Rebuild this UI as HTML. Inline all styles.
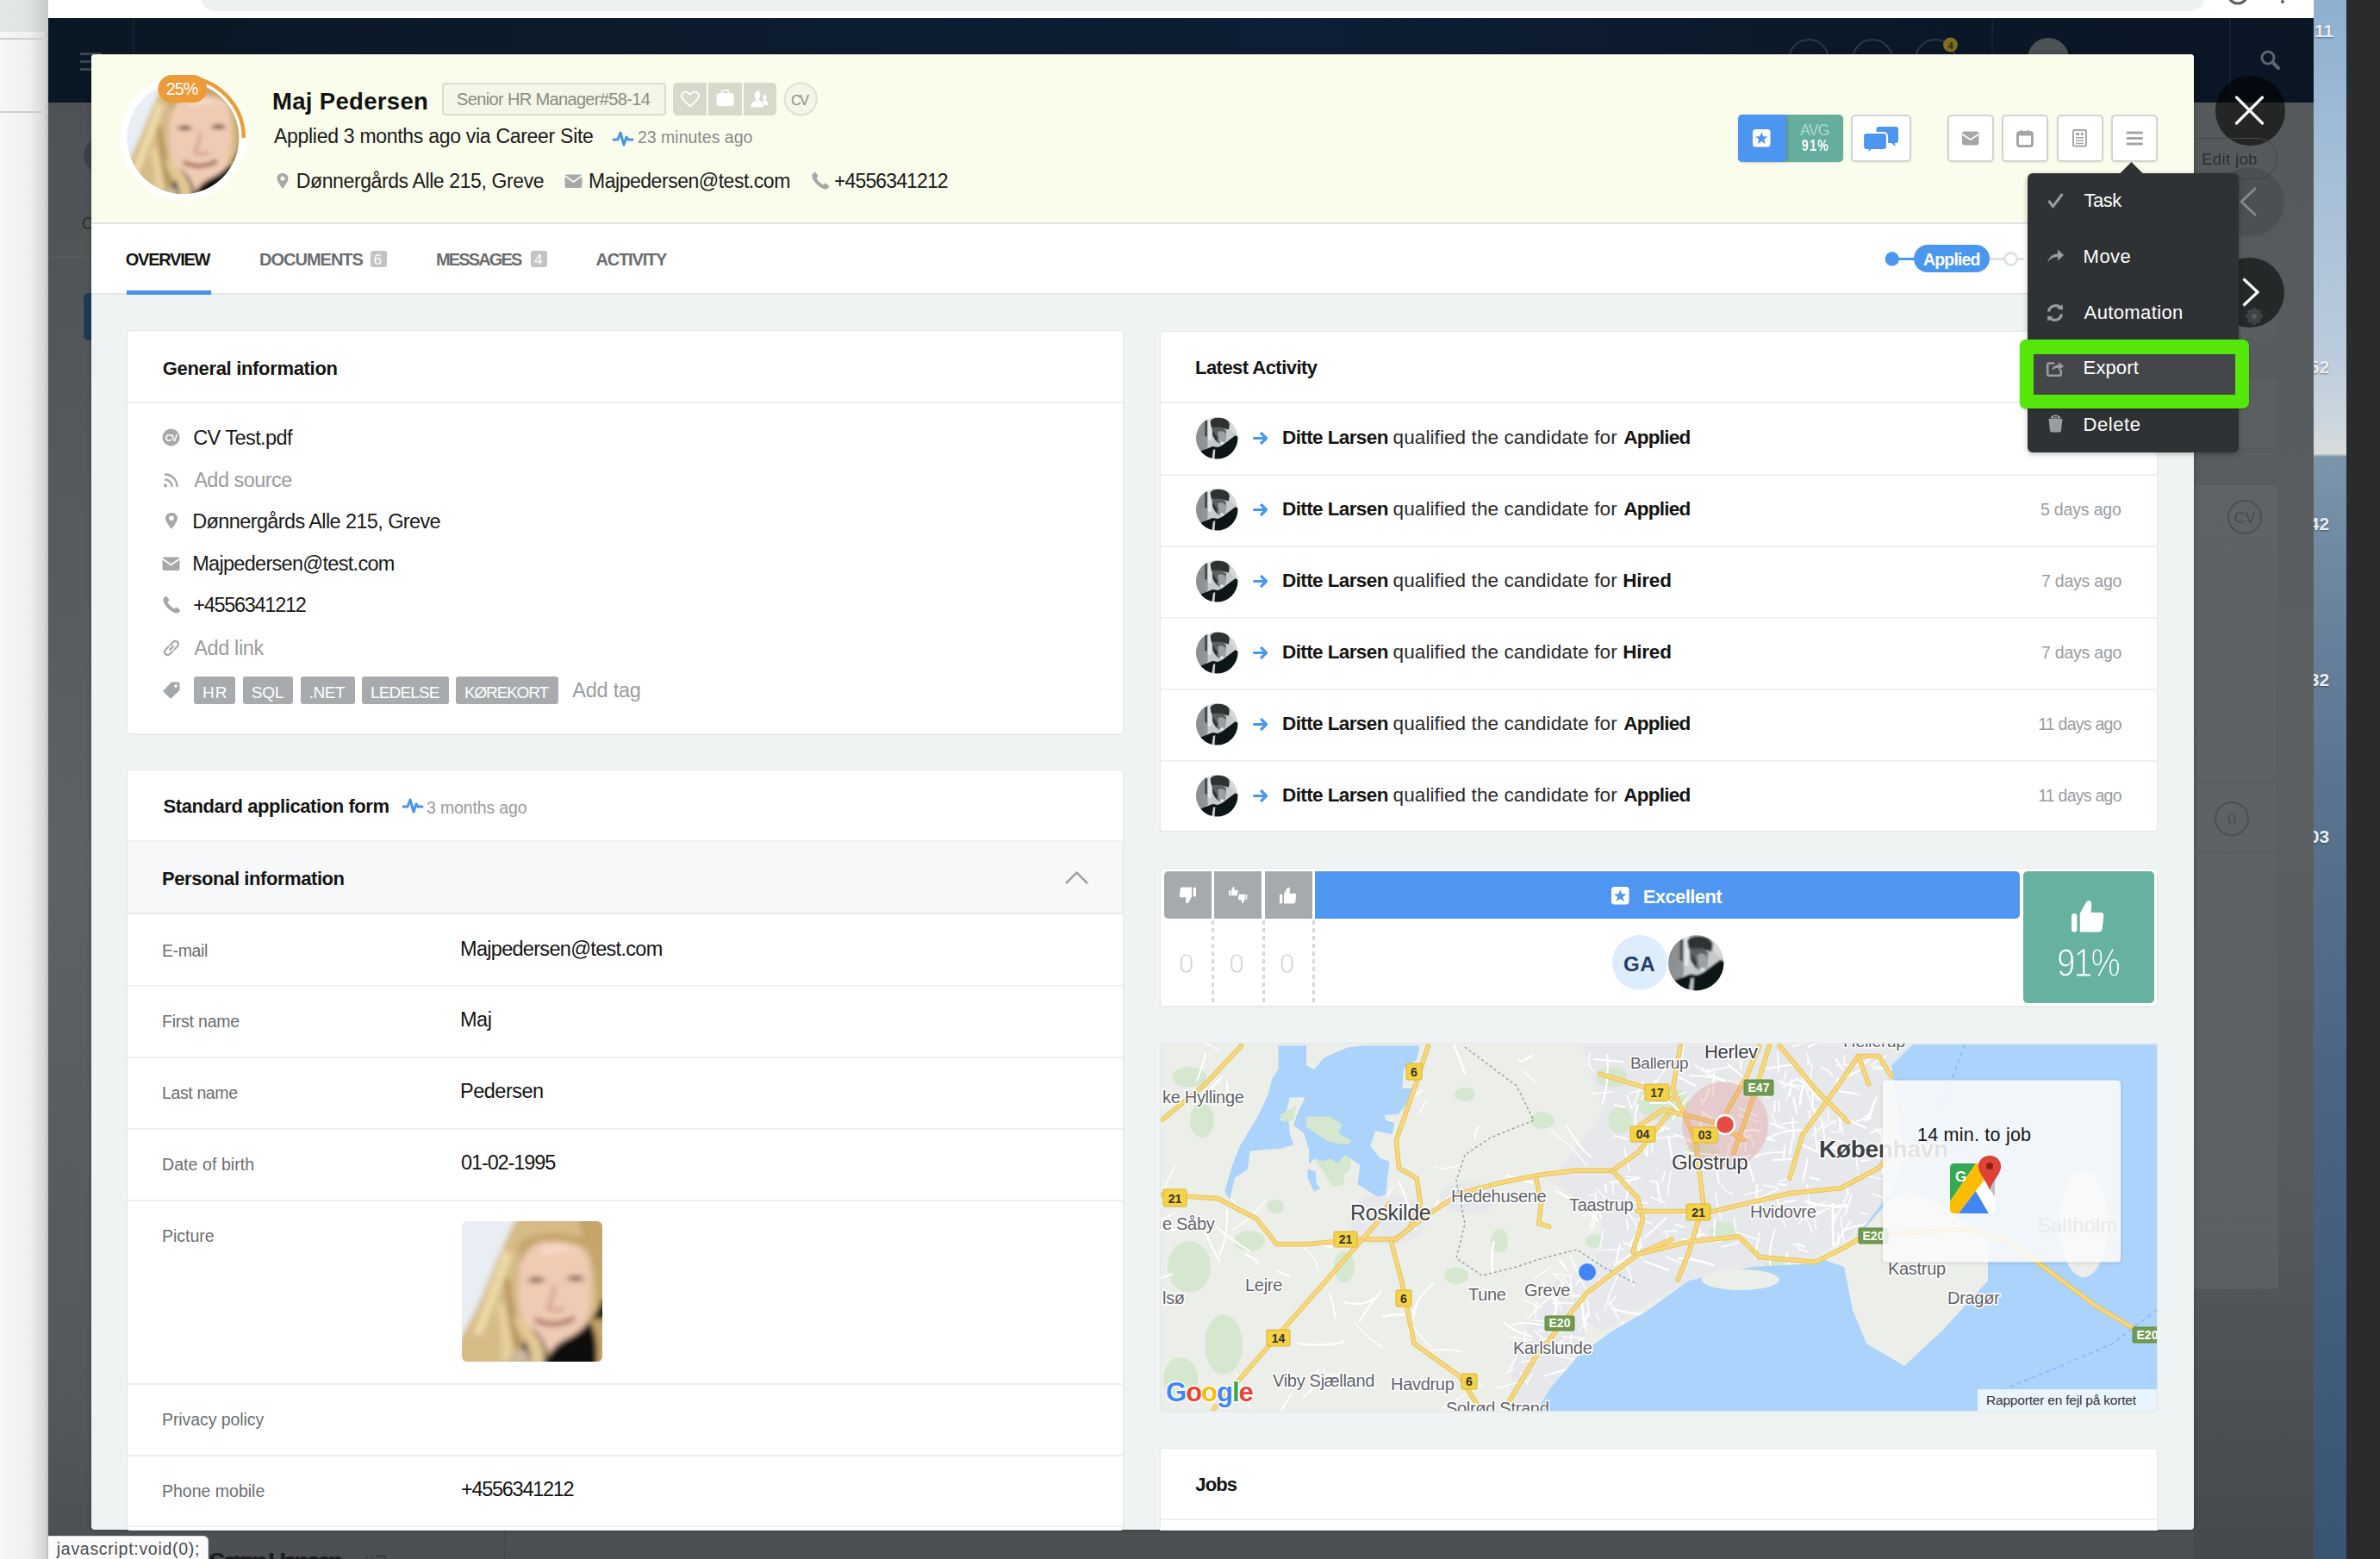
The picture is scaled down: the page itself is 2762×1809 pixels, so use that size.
<!DOCTYPE html>
<html><head><meta charset="utf-8">
<style>
*{box-sizing:border-box;margin:0;padding:0}
html,body{width:2762px;height:1809px;overflow:hidden;background:#2b2c2e;font-family:"Liberation Sans",sans-serif;color:#111}
.a{position:absolute}
.t{position:absolute;line-height:1;white-space:nowrap}
svg{position:absolute;overflow:visible}
.card{position:absolute;background:#fff;border-radius:3px;box-shadow:0 0 0 1px #e5e8e9,0 1px 3px rgba(0,0,0,.07)}
.hb{position:absolute;background:#fff;border:2px solid #d1d3d4;border-radius:5px;box-shadow:0 1px 2px rgba(0,0,0,.08)}

</style></head><body>
<div class="a" style="left:0px;top:0px;width:56px;height:1809px;background:linear-gradient(90deg,#f5f7f8 0%,#eef0f1 60%,#d5d7d8 92%,#b9bbbc 100%)"></div>
<div class="a" style="left:0px;top:0px;width:56px;height:37px;background:linear-gradient(90deg,#e3e7e8 0%,#dfe3e4 60%,#c5c9ca 100%)"></div>
<div class="a" style="left:0px;top:44px;width:56px;height:2px;background:#cdd0d2"></div>
<div class="a" style="left:0px;top:129px;width:56px;height:2px;background:#cdd0d2"></div>
<div class="a" style="left:2685px;top:0px;width:38px;height:1809px;background:linear-gradient(180deg,#8eafcf 0%,#a3bdd6 10%,#b9cadb 22%,#ccd6de 27%,#d9dcdc 29.1%,#7d95ab 29.3%,#6e88a2 36%,#5b7590 50%,#4a6482 70%,#3a5573 100%)"></div>
<div class="a" style="left:2723px;top:0px;width:39px;height:1809px;background:#2a2b2d"></div>
<div class="a" style="left:56px;top:0px;width:2629px;height:22px;background:#fff"></div>
<div class="a" style="left:233px;top:-20px;width:2325px;height:33px;background:#eef1f2;border-radius:16px"></div>
<svg style="left:2580px;top:-14px" width="40" height="30"><circle cx="17" cy="7" r="11" fill="none" stroke="#5f6368" stroke-width="3.2"/></svg>
<div class="a" style="left:2647px;top:0px;width:4px;height:4px;background:#666;border-radius:2px"></div>
<div class="a" style="left:56px;top:21px;width:2629px;height:98px;background:linear-gradient(100deg,#0a1724 0%,#0c1c2e 30%,#0e1f35 55%,#0b1829 80%,#0a1624 100%)"></div>
<div class="a" style="left:154px;top:21px;width:2px;height:98px;background:#142233"></div>
<div class="a" style="left:2311px;top:21px;width:2px;height:98px;background:#142233"></div>
<div class="a" style="left:2587px;top:21px;width:2px;height:98px;background:#142233"></div>
<div class="a" style="left:93px;top:61px;width:25px;height:3px;background:#3a4654"></div>
<div class="a" style="left:93px;top:70px;width:25px;height:3px;background:#3a4654"></div>
<div class="a" style="left:93px;top:79px;width:25px;height:3px;background:#3a4654"></div>
<svg style="left:2074px;top:44px" width="50" height="50"><circle cx="25" cy="25" r="23" fill="none" stroke="#2a3848" stroke-width="2"/></svg>
<svg style="left:2148px;top:44px" width="50" height="50"><circle cx="25" cy="25" r="23" fill="none" stroke="#2a3848" stroke-width="2"/></svg>
<svg style="left:2221px;top:44px" width="50" height="50"><circle cx="25" cy="25" r="23" fill="none" stroke="#2a3848" stroke-width="2"/></svg>
<svg style="left:2253px;top:42px" width="22" height="22"><circle cx="10.5" cy="10" r="8.5" fill="#7d6d1c"/><text x="10.5" y="14.5" font-size="11" font-weight="bold" text-anchor="middle" fill="#2c2a12" font-family="Liberation Sans">4</text></svg>
<div class="a" style="left:2353px;top:44px;width:48px;height:48px;background:#4d5257;border-radius:50%"></div>
<svg style="left:2622px;top:57px" width="30" height="30"><circle cx="10" cy="10" r="7" fill="none" stroke="#5d6670" stroke-width="3"/><line x1="15" y1="15" x2="22" y2="22" stroke="#5d6670" stroke-width="4" stroke-linecap="round"/></svg>
<div class="a" style="left:56px;top:119px;width:2629px;height:1690px;background:linear-gradient(180deg,#4e5254 0%,#575b5d 30%,#5e6264 52%,#595d5f 72%,#54585a 90%,#4b4f51 100%)"></div>
<div class="a" style="left:56px;top:297px;width:2629px;height:1px;background:#585c5e"></div>
<div class="a" style="left:97px;top:340px;width:20px;height:55px;background:#1f3a5a;border-radius:6px"></div>
<div class="a" style="left:97px;top:160px;width:41px;height:41px;background:#3f4244;border-radius:50%"></div>
<div class="t" style="left:94.8px;top:248.8px;font-size:20.0px;color:#2d3032;">C</div>
<div class="a" style="left:2546px;top:119px;width:139px;height:1690px;background:linear-gradient(180deg,#55595b 0%,#5c6062 45%,#565a5c 75%,#46494b 100%)"></div>
<div class="a" style="left:2546px;top:438px;width:97px;height:82px;background:#5b5f61;border-radius:3px;box-shadow:0 0 0 1px #555"></div>
<div class="a" style="left:2546px;top:563px;width:97px;height:932px;background:linear-gradient(180deg,#5f6365,#5c6062);border-radius:3px;box-shadow:0 0 0 1px #575b5d"></div>
<div class="a" style="left:2546px;top:908px;width:97px;height:1px;background:#565a5c"></div>
<div class="a" style="left:2546px;top:990px;width:97px;height:1px;background:#565a5c"></div>
<div class="a" style="left:2546px;top:340px;width:97px;height:53px;background:#5a5e60;border-radius:3px;box-shadow:0 0 0 1px #555"></div>
<svg style="left:2584px;top:579px" width="42" height="42"><circle cx="21" cy="21" r="19" fill="none" stroke="#4c5052" stroke-width="2"/><text x="21" y="28" font-size="18" text-anchor="middle" fill="#474b4d" font-family="Liberation Sans">CV</text></svg>
<svg style="left:2569px;top:929px" width="42" height="42"><circle cx="21" cy="21" r="19" fill="none" stroke="#4c5052" stroke-width="2"/><text x="21" y="28" font-size="18" text-anchor="middle" fill="#474b4d" font-family="Liberation Sans">0</text></svg>
<div class="a" style="left:2685px;top:0;width:38px;height:1809px;overflow:hidden"><div class="t" style="left:0.7px;top:25.0px;font-size:21.0px;font-weight:700;color:#e8eef3;text-shadow:0 1px 2px rgba(0,0,0,.4)">11</div>
<div class="t" style="left:-5.3px;top:414.9px;font-size:21.0px;font-weight:700;color:#e8eef3;text-shadow:0 1px 2px rgba(0,0,0,.4)">52</div>
<div class="t" style="left:-5.3px;top:596.9px;font-size:21.0px;font-weight:700;color:#e8eef3;text-shadow:0 1px 2px rgba(0,0,0,.4)">42</div>
<div class="t" style="left:-5.3px;top:777.9px;font-size:21.0px;font-weight:700;color:#e8eef3;text-shadow:0 1px 2px rgba(0,0,0,.4)">32</div>
<div class="t" style="left:-5.3px;top:959.9px;font-size:21.0px;font-weight:700;color:#e8eef3;text-shadow:0 1px 2px rgba(0,0,0,.4)">03</div>
</div><div class="t" style="left:242.0px;top:1797.3px;font-size:30.0px;letter-spacing:-4.09px;font-weight:700;color:#1b1d1f;">Søren Hansen</div>
<div class="t" style="left:420.0px;top:1800.7px;font-size:26.0px;letter-spacing:-1.00px;color:#3a3d40;font-style:italic">#7</div>
<div class="a" style="left:585px;top:1775px;width:2px;height:34px;background:#46494b"></div>
<div class="a" style="left:106px;top:63px;width:2440px;height:1712px;background:#f0f3f4;border-radius:4px;overflow:hidden;box-shadow:0 0 6px rgba(0,0,0,.25)"></div>
<div class="a" style="left:106px;top:63px;width:2440px;height:196px;background:#fafdeb;border-radius:4px 4px 0 0"></div>
<div class="a" style="left:106px;top:258px;width:2440px;height:2px;background:#e2e5e5"></div>
<div class="a" style="left:106px;top:260px;width:2440px;height:81px;background:#fff"></div>
<div class="a" style="left:106px;top:340px;width:2440px;height:2px;background:#e4e7e9"></div>
<svg width="0" height="0" style="left:0;top:0"><defs>
<filter id="wb" x="-5%" y="-5%" width="110%" height="110%"><feGaussianBlur stdDeviation="2"/></filter>
<symbol id="woman" viewBox="0 0 100 100"><g filter="url(#wb)">
<rect x="-5" y="-5" width="110" height="110" fill="#e8eef3"/>
<path d="M40 -5 L105 -5 L105 105 L-5 105 L-5 90 Q6 72 15 52 Q26 24 40 -5 Z" fill="#d6bb87"/>
<path d="M30 20 Q20 50 8 80 L14 82 Q26 52 36 24 Z" fill="#ecd9a8"/>
<path d="M24 60 Q30 80 28 100 L36 100 Q36 78 30 58 Z" fill="#e6d09c"/>
<path d="M34 40 Q38 70 44 90 L38 92 Q32 70 30 42 Z" fill="#b8985f"/>
<path d="M42 30 Q43 12 62 11 Q85 10 90 28 Q95 52 88 74 Q80 92 64 92 Q48 90 43 72 Q38 52 42 30 Z" fill="#efcbb3"/>
<path d="M40 16 Q60 2 92 14 L93 22 Q76 12 56 15 Q46 18 42 30 Z" fill="#c5a46b"/>
<path d="M86 12 Q97 30 96 62 L105 70 L105 -5 L82 -5 Z" fill="#c6a46a"/>
<path d="M56 20 Q70 16 84 22 Q72 20 58 24 Z" fill="#f6e0d0"/>
<path d="M46 42 Q53 38 60 42 Q53 45 46 42 Z" fill="#4a3028"/>
<path d="M74 41 Q81 37 88 41 Q81 44 74 41 Z" fill="#4a3028"/>
<path d="M66 46 Q64 58 61 62 Q67 65 73 62" fill="none" stroke="#c9917a" stroke-width="2"/>
<path d="M52 70 Q66 77 80 69" fill="none" stroke="#9e5450" stroke-width="3"/>
<path d="M58 105 Q62 88 78 82 Q92 74 100 56 L105 56 L105 105 Z" fill="#0a0a0e"/>
<path d="M40 105 Q42 85 50 76 Q56 80 60 90 L62 105 Z" fill="#1f2944"/>
<path d="M36 68 Q52 74 58 90 Q60 98 57 105 L49 105 Q50 88 40 78 Z" fill="#e3c892"/>
<path d="M30 105 Q36 88 46 92 L50 105 Z" fill="#cbb89b"/>
<path d="M90 70 Q98 80 96 105 L105 105 L105 70 Z" fill="#c7a66c"/>
</g></symbol></defs></svg>
<svg style="left:130px;top:78px" width="165" height="165" viewBox="0 0 165 165">
<defs><clipPath id="avc"><circle cx="82.4" cy="82.1" r="65"/></clipPath></defs>
<circle cx="82.4" cy="82.1" r="72.6" fill="#fff"/>
<g clip-path="url(#avc)"><use href="#woman" x="10" y="12" width="140" height="140"/></g>
<path d="M82.4 11.7 A70.4 70.4 0 0 1 152.8 82.1" fill="none" stroke="#ec9a3a" stroke-width="4.4"/>
<rect x="53.4" y="9.1" width="56.7" height="32.2" rx="16" fill="#ec9a3a"/>
</svg>
<div class="t" style="left:192.8px;top:94.0px;font-size:19.8px;letter-spacing:-1.00px;color:#fff;">25%</div>
<div class="t" style="left:316.0px;top:104.0px;font-size:27.5px;letter-spacing:0.32px;font-weight:700;">Maj Pedersen</div>
<div class="a" style="left:513px;top:96px;width:260px;height:38px;background:#f4f6e8;border:2px solid #dadccf;border-radius:4px"></div>
<div class="t" style="left:530.0px;top:105.4px;font-size:20.0px;letter-spacing:-0.64px;color:#8a8d80;">Senior HR Manager#58-14</div>
<div class="a" style="left:781px;top:96px;width:120px;height:38px;background:#d7dacb;border-radius:5px"></div>
<div class="a" style="left:820px;top:96px;width:2px;height:38px;background:#fafdeb"></div>
<div class="a" style="left:861px;top:96px;width:2px;height:38px;background:#fafdeb"></div>
<svg style="left:789px;top:104px" width="24" height="22" viewBox="0 0 24 22"><path d="M12 19.5 L3.5 11 C0.8 8.2 1.5 3.5 5.5 2.8 C8.2 2.3 10.5 3.8 12 6 C13.5 3.8 15.8 2.3 18.5 2.8 C22.5 3.5 23.2 8.2 20.5 11 Z" fill="none" stroke="#fff" stroke-width="1.8" stroke-linejoin="round"/></svg>
<svg style="left:831px;top:104px" width="22" height="20" viewBox="0 0 22 20"><rect x="6.5" y="0.8" width="8" height="4" rx="1.5" fill="none" stroke="#fff" stroke-width="1.6"/><rect x="0.5" y="4" width="20" height="15" rx="2.5" fill="#fff"/></svg>
<svg style="left:871px;top:105px" width="22" height="21" viewBox="0 0 22 21"><path d="M8 0.5 C5.5 0.5 4.5 3 4.7 5.5 C4.9 8 6 10 6.5 11 C6 12.5 1.5 13.5 0.5 16.5 L0.5 19.5 L15.5 19.5 L15.5 16.5 C14.5 13.5 10 12.5 9.5 11 C10 10 11.1 8 11.3 5.5 C11.5 3 10.5 0.5 8 0.5 Z" fill="#fff"/><path d="M16.5 5 C15 5 14.4 6.5 14.5 8 C14.6 9.5 15.2 10.6 15.5 11.2 C15.3 12 14 12.5 13.5 13 L17 17 L21 17 L21 15.5 C20.5 13.5 18 12.5 17.6 11.2 C17.9 10.6 18.5 9.5 18.6 8 C18.7 6.5 18 5 16.5 5 Z" fill="#fff"/></svg>
<svg style="left:908px;top:94px" width="42" height="42"><circle cx="21.3" cy="20.9" r="18.5" fill="#f3f6e9" stroke="#dde0d3" stroke-width="2"/></svg>
<div class="t" style="left:918.0px;top:107.8px;font-size:16.5px;letter-spacing:-2.00px;color:#8b8e83;">CV</div>
<div class="t" style="left:318.0px;top:146.7px;font-size:23.0px;letter-spacing:-0.29px;color:#1a1a1a;">Applied 3 months ago via Career Site</div>
<svg style="left:711px;top:150px" width="24" height="22" viewBox="0 0 24 22"><path d="M1 12 L6 12 L9 4 L13 18 L16 9 L18 12 L23 12" fill="none" stroke="#4a93ea" stroke-width="3" stroke-linejoin="round" stroke-linecap="round"/></svg>
<div class="t" style="left:740.0px;top:149.6px;font-size:19.5px;letter-spacing:0.00px;color:#8a8a8a;">23 minutes ago</div>
<svg style="left:320px;top:200px" width="16" height="20" viewBox="0 0 16 20"><path d="M8 19 C8 19 1.5 11 1.5 7 C1.5 3.3 4.5 1 8 1 C11.5 1 14.5 3.3 14.5 7 C14.5 11 8 19 8 19 Z" fill="#a6a9ab"/><circle cx="8" cy="7" r="2.6" fill="#fafdeb"/></svg>
<div class="t" style="left:343.8px;top:198.8px;font-size:23.0px;letter-spacing:-0.39px;color:#1a1a1a;">Dønnergårds Alle 215, Greve</div>
<svg style="left:655px;top:202px" width="21" height="17" viewBox="0 0 21 17"><rect x="0.5" y="0.5" width="20" height="15.5" rx="2" fill="#a6a9ab"/><path d="M0.5 2 L10.5 9 L20.5 2" fill="none" stroke="#fafdeb" stroke-width="1.8"/></svg>
<div class="t" style="left:683.0px;top:198.8px;font-size:23.0px;letter-spacing:-0.47px;color:#1a1a1a;">Majpedersen@test.com</div>
<svg style="left:941px;top:199px" width="22" height="22" viewBox="0 0 22 22"><path d="M3.5 1.5 C2 2.5 1 4 1.5 6.5 C2.5 11 9 18 14.5 20 C17 21 18.8 20.5 20.2 19 L21 18 C21.3 17.5 21.2 16.8 20.7 16.4 L17.5 14 C17 13.6 16.3 13.6 15.8 14.1 L14.3 15.5 C11.5 14 8 10.5 6.5 7.7 L7.9 6.2 C8.4 5.7 8.4 5 8 4.5 L5.6 1.3 C5.2 0.8 4.5 0.7 4 1.1 Z" fill="#a6a9ab"/></svg>
<div class="t" style="left:968.0px;top:198.8px;font-size:23.0px;letter-spacing:-0.87px;color:#1a1a1a;">+4556341212</div>
<div class="a" style="left:2017px;top:133px;width:122px;height:55px;background:#65ae9f;border-radius:5px;box-shadow:0 1px 2px rgba(0,0,0,.12)"></div>
<div class="a" style="left:2017px;top:133px;width:56px;height:55px;background:#4d96f0;border-radius:5px;box-shadow:2px 0 3px rgba(0,0,0,.12)"></div>
<svg style="left:2034px;top:150px" width="21" height="21" viewBox="0 0 21 21"><rect x="0" y="0" width="20.5" height="20.5" rx="3.5" fill="#fff"/><path d="M10.25 3.2 L12.2 8.3 L17.5 8.5 L13.3 11.8 L14.8 17 L10.25 14 L5.7 17 L7.2 11.8 L3 8.5 L8.3 8.3 Z" fill="#4d96f0"/></svg>
<div class="t" style="left:2089.0px;top:143.3px;font-size:17.5px;letter-spacing:-0.60px;color:#d6efe8;-webkit-text-stroke:0.5px #65ae9f">AVG</div>
<div class="t" style="left:2091.0px;top:161.3px;font-size:17.5px;letter-spacing:1.70px;font-weight:700;color:#fff;transform:scaleX(0.8);transform-origin:0 0">91%</div>
<div class="hb" style="left:2148px;top:133px;width:70px;height:55px"></div>
<svg style="left:2160px;top:145px" width="46" height="36" viewBox="0 0 46 36"><path d="M20.5 2 H40 A3 3 0 0 1 43 5 V18 A3 3 0 0 1 40 21 H39 L39.5 25 L35 21 H20.5 A3 3 0 0 1 17.5 18 V5 A3 3 0 0 1 20.5 2 Z" fill="#4d96f0"/>
<path d="M6 9 H26 A4 4 0 0 1 30 13 V25 A4 4 0 0 1 26 29 H12 L7 34 L7.5 29 H6 A4 4 0 0 1 2 25 V13 A4 4 0 0 1 6 9 Z" fill="#4d96f0" stroke="#fff" stroke-width="2.2"/></svg>
<div class="hb" style="left:2260px;top:133px;width:54px;height:55px"></div>
<div class="hb" style="left:2323px;top:133px;width:54px;height:55px"></div>
<div class="hb" style="left:2387px;top:133px;width:54px;height:55px"></div>
<div class="hb" style="left:2450px;top:133px;width:54px;height:55px"></div>
<svg style="left:2277px;top:152px" width="20" height="17" viewBox="0 0 20 17"><rect x="0" y="0.5" width="19.5" height="16" rx="3" fill="#a4a7a9"/><path d="M0.5 4 L9.75 10 L19 4" fill="none" stroke="#fff" stroke-width="1.8"/></svg>
<svg style="left:2340px;top:150px" width="21" height="21" viewBox="0 0 21 21"><rect x="1.5" y="3.5" width="17" height="16" rx="2.5" fill="none" stroke="#a4a7a9" stroke-width="3"/><rect x="1.5" y="3.5" width="17" height="4" fill="#a4a7a9"/><line x1="6" y1="0.5" x2="6" y2="4" stroke="#a4a7a9" stroke-width="1.6"/><line x1="14" y1="0.5" x2="14" y2="4" stroke="#a4a7a9" stroke-width="1.6"/></svg>
<svg style="left:2405px;top:150px" width="18" height="21" viewBox="0 0 18 21"><rect x="1" y="1" width="15" height="18.5" rx="1.5" fill="none" stroke="#a4a7a9" stroke-width="2"/><rect x="4" y="4" width="4" height="3" fill="#a4a7a9"/><rect x="10" y="4" width="3" height="3" fill="#a4a7a9"/><rect x="4" y="9" width="9" height="1.5" fill="#a4a7a9"/><rect x="4" y="12.3" width="9" height="1.5" fill="#a4a7a9"/><rect x="4" y="15.6" width="9" height="1.5" fill="#a4a7a9"/></svg>
<svg style="left:2467px;top:152px" width="21" height="17" viewBox="0 0 21 17"><rect x="0.5" y="0.5" width="19.5" height="3" rx="1.5" fill="#a4a7a9"/><rect x="0.5" y="7" width="19.5" height="3" rx="1.5" fill="#a4a7a9"/><rect x="0.5" y="13.5" width="19.5" height="3" rx="1.5" fill="#a4a7a9"/></svg>
<div class="t" style="left:145.8px;top:291.2px;font-size:20.0px;letter-spacing:-1.26px;font-weight:700;color:#151515;">OVERVIEW</div>
<div class="a" style="left:147px;top:337px;width:98px;height:5px;background:#4a91e9"></div>
<div class="t" style="left:301.0px;top:291.2px;font-size:20.0px;letter-spacing:-1.00px;font-weight:700;color:#6b6d6f;">DOCUMENTS</div>
<div class="a" style="left:430px;top:291px;width:19px;height:19px;background:#c1c3c5;border-radius:3px"></div>
<div class="t" style="left:433.5px;top:293.4px;font-size:17.0px;letter-spacing:72.00px;color:#fff;">6</div>
<div class="t" style="left:506.0px;top:291.2px;font-size:20.0px;letter-spacing:-1.86px;font-weight:700;color:#6b6d6f;">MESSAGES</div>
<div class="a" style="left:616px;top:291px;width:19px;height:19px;background:#c1c3c5;border-radius:3px"></div>
<div class="t" style="left:620.0px;top:293.4px;font-size:17.0px;letter-spacing:54.00px;color:#fff;">4</div>
<div class="t" style="left:691.5px;top:291.2px;font-size:20.0px;letter-spacing:-1.17px;font-weight:700;color:#6b6d6f;">ACTIVITY</div>
<svg style="left:2180px;top:280px" width="180" height="40"><circle cx="15.8" cy="20.5" r="8.2" fill="#4a97ee"/><rect x="20" y="19" width="30" height="3" fill="#4a97ee"/><rect x="41" y="4" width="88" height="32" rx="16" fill="#4a97ee"/><rect x="129" y="19" width="40" height="3" fill="#dfe2e4"/><circle cx="153.6" cy="20.5" r="7" fill="#fff" stroke="#dfe2e4" stroke-width="3"/></svg>
<div class="t" style="left:2232.0px;top:291.7px;font-size:19.5px;letter-spacing:-0.83px;font-weight:700;color:#fff;">Applied</div>
<div class="card" style="left:148px;top:384px;width:1155px;height:467px"></div>
<div class="a" style="left:148px;top:466px;width:1155px;height:2px;background:#eef0f1"></div>
<div class="t" style="left:188.7px;top:416.5px;font-size:22.0px;letter-spacing:-0.32px;font-weight:700;color:#141414;">General information</div>
<div class="t" style="left:224.2px;top:496.8px;font-size:23.5px;letter-spacing:-0.56px;color:#1a1a1a;">CV Test.pdf</div>
<div class="t" style="left:225.2px;top:545.6px;font-size:23.5px;letter-spacing:-0.52px;color:#9a9c9e;">Add source</div>
<div class="t" style="left:223.2px;top:594.4px;font-size:23.5px;letter-spacing:-0.61px;color:#1a1a1a;">Dønnergårds Alle 215, Greve</div>
<div class="t" style="left:223.2px;top:643.1px;font-size:23.5px;letter-spacing:-0.70px;color:#1a1a1a;">Majpedersen@test.com</div>
<div class="t" style="left:224.2px;top:691.2px;font-size:23.5px;letter-spacing:-1.28px;color:#1a1a1a;">+4556341212</div>
<div class="t" style="left:225.2px;top:740.5px;font-size:23.5px;letter-spacing:-0.37px;color:#9a9c9e;">Add link</div>
<svg style="left:188px;top:497px" width="22" height="22" viewBox="0 0 22 22"><circle cx="10.5" cy="10.5" r="10" fill="#a5a8aa"/><text x="10.5" y="15" font-size="11" font-weight="bold" text-anchor="middle" fill="#fff" font-family="Liberation Sans" letter-spacing="-1">CV</text></svg>
<svg style="left:189px;top:547px" width="20" height="20" viewBox="0 0 20 20"><circle cx="3" cy="16.5" r="2" fill="#a5a8aa"/><path d="M2 9.5 A8 8 0 0 1 10.5 18" fill="none" stroke="#a5a8aa" stroke-width="2.3"/><path d="M2 3.5 A14 14 0 0 1 16.5 18" fill="none" stroke="#a5a8aa" stroke-width="2.3"/></svg>
<svg style="left:191px;top:594px" width="16" height="21" viewBox="0 0 16 21"><path d="M8 20 C8 20 1 11.5 1 7.3 C1 3.5 4 1 8 1 C12 1 15 3.5 15 7.3 C15 11.5 8 20 8 20 Z" fill="#a5a8aa"/><circle cx="8" cy="7.3" r="2.8" fill="#fff"/></svg>
<svg style="left:188px;top:646px" width="21" height="17" viewBox="0 0 21 17"><rect x="0.5" y="0.5" width="20" height="15.5" rx="2" fill="#a5a8aa"/><path d="M0.5 2.5 L10.5 9.5 L20.5 2.5" fill="none" stroke="#fff" stroke-width="1.8"/></svg>
<svg style="left:188px;top:691px" width="22" height="22" viewBox="0 0 22 22"><path d="M3.5 1.5 C2 2.5 1 4 1.5 6.5 C2.5 11 9 18 14.5 20 C17 21 18.8 20.5 20.2 19 L21 18 C21.3 17.5 21.2 16.8 20.7 16.4 L17.5 14 C17 13.6 16.3 13.6 15.8 14.1 L14.3 15.5 C11.5 14 8 10.5 6.5 7.7 L7.9 6.2 C8.4 5.7 8.4 5 8 4.5 L5.6 1.3 C5.2 0.8 4.5 0.7 4 1.1 Z" fill="#a5a8aa"/></svg>
<svg style="left:188px;top:741px" width="22" height="22" viewBox="0 0 22 22"><path d="M9 13 L13 9" stroke="#a5a8aa" stroke-width="2.2" stroke-linecap="round"/><path d="M7.5 9.5 L4 13 A3.5 3.5 0 0 0 9 18 L12.5 14.5" fill="none" stroke="#a5a8aa" stroke-width="2.2" stroke-linecap="round"/><path d="M9.5 7.5 L13 4 A3.5 3.5 0 0 1 18 9 L14.5 12.5" fill="none" stroke="#a5a8aa" stroke-width="2.2" stroke-linecap="round"/></svg>
<svg style="left:188px;top:790px" width="22" height="22" viewBox="0 0 22 22"><path d="M11 1.5 H19 A1.5 1.5 0 0 1 20.5 3 V11 L10 21 L1 12 Z" fill="#a5a8aa"/><circle cx="16" cy="6" r="1.8" fill="#fff"/></svg>
<div class="a" style="left:225px;top:785px;width:48px;height:32px;background:#a8abad;border-radius:3px"></div>
<div class="t" style="left:234.9px;top:794.1px;font-size:19.0px;letter-spacing:1.20px;color:#fff;">HR</div>
<div class="a" style="left:282px;top:785px;width:58px;height:32px;background:#a8abad;border-radius:3px"></div>
<div class="t" style="left:291.8px;top:794.1px;font-size:19.0px;letter-spacing:-0.20px;color:#fff;">SQL</div>
<div class="a" style="left:349px;top:785px;width:63px;height:32px;background:#a8abad;border-radius:3px"></div>
<div class="t" style="left:358.7px;top:794.1px;font-size:19.0px;letter-spacing:-0.43px;color:#fff;">.NET</div>
<div class="a" style="left:420px;top:785px;width:101px;height:32px;background:#a8abad;border-radius:3px"></div>
<div class="t" style="left:430.0px;top:794.1px;font-size:19.0px;letter-spacing:-0.86px;color:#fff;">LEDELSE</div>
<div class="a" style="left:529px;top:785px;width:119px;height:32px;background:#a8abad;border-radius:3px"></div>
<div class="t" style="left:539.0px;top:794.1px;font-size:19.0px;letter-spacing:-1.18px;color:#fff;">KØREKORT</div>
<div class="t" style="left:664.3px;top:790.3px;font-size:23.5px;letter-spacing:-0.25px;color:#9a9c9e;">Add tag</div>
<div class="card" style="left:148px;top:894px;width:1155px;height:881px"></div>
<div class="a" style="left:148px;top:975px;width:1155px;height:2px;background:#eef0f1"></div>
<div class="t" style="left:189.5px;top:925.1px;font-size:22.0px;letter-spacing:-0.42px;font-weight:700;color:#141414;">Standard application form</div>
<svg style="left:467px;top:924px" width="24" height="22" viewBox="0 0 24 22"><path d="M1 12 L6 12 L9 4 L13 18 L16 9 L18 12 L23 12" fill="none" stroke="#4a93ea" stroke-width="3" stroke-linejoin="round" stroke-linecap="round"/></svg>
<div class="t" style="left:495.0px;top:928.2px;font-size:19.5px;letter-spacing:-0.14px;color:#999b9d;">3 months ago</div>
<div class="a" style="left:148px;top:977px;width:1155px;height:83px;background:#f6f8f9"></div>
<div class="a" style="left:148px;top:1059px;width:1155px;height:2px;background:#e9ecee"></div>
<div class="t" style="left:188.0px;top:1008.6px;font-size:22.0px;letter-spacing:-0.42px;font-weight:700;color:#141414;">Personal information</div>
<svg style="left:1234px;top:1007px" width="32" height="22"><path d="M3 18 L15.5 5.5 L28 18" fill="none" stroke="#9ea1a3" stroke-width="2.5"/></svg>
<div class="t" style="left:188.0px;top:1093.7px;font-size:19.5px;letter-spacing:-0.40px;color:#6b6e70;">E-mail</div>
<div class="t" style="left:534.0px;top:1090.3px;font-size:23.5px;letter-spacing:-0.70px;color:#141414;">Majpedersen@test.com</div>
<div class="a" style="left:148px;top:1143px;width:1155px;height:2px;background:#eef0f1"></div>
<div class="t" style="left:188.0px;top:1175.7px;font-size:19.5px;letter-spacing:-0.22px;color:#6b6e70;">First name</div>
<div class="t" style="left:534.0px;top:1172.3px;font-size:23.5px;letter-spacing:-0.50px;color:#141414;">Maj</div>
<div class="a" style="left:148px;top:1226px;width:1155px;height:2px;background:#eef0f1"></div>
<div class="t" style="left:188.0px;top:1258.7px;font-size:19.5px;letter-spacing:-0.38px;color:#6b6e70;">Last name</div>
<div class="t" style="left:534.0px;top:1255.3px;font-size:23.5px;letter-spacing:-0.50px;color:#141414;">Pedersen</div>
<div class="a" style="left:148px;top:1309px;width:1155px;height:2px;background:#eef0f1"></div>
<div class="t" style="left:188.0px;top:1341.7px;font-size:19.5px;letter-spacing:0.08px;color:#6b6e70;">Date of birth</div>
<div class="t" style="left:535.0px;top:1338.3px;font-size:23.5px;letter-spacing:-1.11px;color:#141414;">01-02-1995</div>
<div class="a" style="left:148px;top:1392px;width:1155px;height:2px;background:#eef0f1"></div>
<div class="t" style="left:188.0px;top:1425.2px;font-size:19.5px;color:#6b6e70;">Picture</div>
<div class="a" style="left:148px;top:1605px;width:1155px;height:2px;background:#eef0f1"></div>
<div class="t" style="left:188.0px;top:1637.7px;font-size:19.5px;letter-spacing:-0.08px;color:#6b6e70;">Privacy policy</div>
<div class="a" style="left:148px;top:1688px;width:1155px;height:2px;background:#eef0f1"></div>
<div class="t" style="left:188.0px;top:1720.7px;font-size:19.5px;letter-spacing:-0.00px;color:#6b6e70;">Phone mobile</div>
<div class="t" style="left:535.0px;top:1717.3px;font-size:23.5px;letter-spacing:-1.28px;color:#141414;">+4556341212</div>
<div class="a" style="left:148px;top:1770px;width:1155px;height:2px;background:#eef0f1"></div>
<svg style="left:535.5px;top:1417px" width="163" height="163" viewBox="0 0 163 163"><defs><clipPath id="picc"><rect x="0" y="0" width="163" height="163" rx="6"/></clipPath></defs><g clip-path="url(#picc)"><use href="#woman" x="0" y="0" width="163" height="163"/></g></svg>
<svg width="0" height="0" style="left:0;top:0"><defs>
<clipPath id="mc"><circle cx="50" cy="50" r="50"/></clipPath>
<filter id="mb" x="-10%" y="-10%" width="120%" height="120%"><feGaussianBlur stdDeviation="1.3"/></filter>
<symbol id="man" viewBox="0 0 100 100"><g clip-path="url(#mc)"><g filter="url(#mb)">
<rect x="-5" y="-5" width="110" height="110" fill="#c6cacd"/>
<rect x="-5" y="-5" width="30" height="110" fill="#8c9093"/>
<rect x="21" y="8" width="6" height="55" fill="#474b4e"/>
<rect x="29" y="-5" width="8" height="60" fill="#e4e7e8"/>
<path d="M80 -5 L105 -5 L105 50 Q90 40 82 30 Z" fill="#d5d8da"/>
<path d="M14 50 Q20 42 27 48 L28 72 L14 74 Z" fill="#909497"/>
<path d="M34 10 Q40 0 60 2 Q78 4 80 18 L78 30 L62 26 L40 30 L36 22 Z" fill="#2d3032"/>
<path d="M38 24 L62 24 L72 32 L70 58 L58 64 L48 58 L40 44 Z" fill="#5a5e61"/>
<path d="M42 34 Q46 44 52 50 L48 56 Q40 48 40 38 Z" fill="#2f3234"/>
<path d="M52 36 Q62 30 70 38 L70 60 L60 66 L54 56 Z" fill="#9ca0a3"/>
<ellipse cx="62" cy="62" rx="5" ry="3" fill="#e8eaeb"/>
<path d="M10 82 L40 70 L52 72 L62 68 L94 44 L106 50 L106 106 L8 106 Z" fill="#111314"/>
<path d="M37 106 L41 78 L46 77 L44 106 Z" fill="#c9cdd0"/>
</g></g></symbol>
<symbol id="thu" viewBox="0 0 20 20"><rect x="0" y="8.5" width="3.3" height="11" rx="1.5" fill="#fff"/><path d="M5 8.5 L8.8 1.6 Q9.8 0.4 11.3 1 Q11.9 1.4 11.9 2.5 L11.6 7.8 H17.6 Q19.3 8 19.2 9.8 L18.3 17.6 Q18 19.5 16 19.5 H5.6 Q5 19.5 5 18.8 Z" fill="#fff"/></symbol>
</defs></svg>
<div class="card" style="left:1347px;top:385px;width:1156px;height:579px"></div>
<div class="a" style="left:1347px;top:466px;width:1156px;height:2px;background:#eef0f1"></div>
<div class="t" style="left:1387.0px;top:416.1px;font-size:22.0px;letter-spacing:-0.54px;font-weight:700;color:#141414;">Latest Activity</div>
<svg style="left:1387.8px;top:484px" width="48.5" height="48.5"><use href="#man" width="48.5" height="48.5"/></svg>
<svg style="left:1452px;top:500px" width="22" height="17" viewBox="0 0 22 17"><path d="M3.5 8.5 H17 M12 3 L17.5 8.5 L12 14" fill="none" stroke="#4a97f0" stroke-width="3.2" stroke-linecap="round" stroke-linejoin="round"/></svg>
<div class="t" style="left:1488.0px;top:496.9px;font-size:22.5px;letter-spacing:-0.60px;font-weight:700;color:#141414;">Ditte Larsen</div>
<div class="t" style="left:1616.6px;top:496.9px;font-size:22.5px;letter-spacing:0.09px;color:#2a2a2a;">qualified the candidate for</div>
<div class="t" style="left:1884.2px;top:496.9px;font-size:22.5px;letter-spacing:-0.75px;font-weight:700;color:#141414;">Applied</div>
<div class="a" style="left:1347px;top:550px;width:1156px;height:2px;background:#eef0f1"></div>
<svg style="left:1387.8px;top:567px" width="48.5" height="48.5"><use href="#man" width="48.5" height="48.5"/></svg>
<svg style="left:1452px;top:583px" width="22" height="17" viewBox="0 0 22 17"><path d="M3.5 8.5 H17 M12 3 L17.5 8.5 L12 14" fill="none" stroke="#4a97f0" stroke-width="3.2" stroke-linecap="round" stroke-linejoin="round"/></svg>
<div class="t" style="left:1488.0px;top:579.9px;font-size:22.5px;letter-spacing:-0.60px;font-weight:700;color:#141414;">Ditte Larsen</div>
<div class="t" style="left:1616.6px;top:579.9px;font-size:22.5px;letter-spacing:0.09px;color:#2a2a2a;">qualified the candidate for</div>
<div class="t" style="left:1884.2px;top:579.9px;font-size:22.5px;letter-spacing:-0.75px;font-weight:700;color:#141414;">Applied</div>
<div class="t" style="left:2367.9px;top:582.4px;font-size:19.5px;letter-spacing:-0.16px;color:#9a9da0;">5 days ago</div>
<div class="a" style="left:1347px;top:633px;width:1156px;height:2px;background:#eef0f1"></div>
<svg style="left:1387.8px;top:650px" width="48.5" height="48.5"><use href="#man" width="48.5" height="48.5"/></svg>
<svg style="left:1452px;top:666px" width="22" height="17" viewBox="0 0 22 17"><path d="M3.5 8.5 H17 M12 3 L17.5 8.5 L12 14" fill="none" stroke="#4a97f0" stroke-width="3.2" stroke-linecap="round" stroke-linejoin="round"/></svg>
<div class="t" style="left:1488.0px;top:662.9px;font-size:22.5px;letter-spacing:-0.60px;font-weight:700;color:#141414;">Ditte Larsen</div>
<div class="t" style="left:1616.6px;top:662.9px;font-size:22.5px;letter-spacing:0.09px;color:#2a2a2a;">qualified the candidate for</div>
<div class="t" style="left:1883.2px;top:662.9px;font-size:22.5px;letter-spacing:-0.20px;font-weight:700;color:#141414;">Hired</div>
<div class="t" style="left:2369.0px;top:665.4px;font-size:19.5px;letter-spacing:-0.23px;color:#9a9da0;">7 days ago</div>
<div class="a" style="left:1347px;top:716px;width:1156px;height:2px;background:#eef0f1"></div>
<svg style="left:1387.8px;top:733px" width="48.5" height="48.5"><use href="#man" width="48.5" height="48.5"/></svg>
<svg style="left:1452px;top:749px" width="22" height="17" viewBox="0 0 22 17"><path d="M3.5 8.5 H17 M12 3 L17.5 8.5 L12 14" fill="none" stroke="#4a97f0" stroke-width="3.2" stroke-linecap="round" stroke-linejoin="round"/></svg>
<div class="t" style="left:1488.0px;top:745.9px;font-size:22.5px;letter-spacing:-0.60px;font-weight:700;color:#141414;">Ditte Larsen</div>
<div class="t" style="left:1616.6px;top:745.9px;font-size:22.5px;letter-spacing:0.09px;color:#2a2a2a;">qualified the candidate for</div>
<div class="t" style="left:1883.2px;top:745.9px;font-size:22.5px;letter-spacing:-0.20px;font-weight:700;color:#141414;">Hired</div>
<div class="t" style="left:2369.0px;top:748.4px;font-size:19.5px;letter-spacing:-0.23px;color:#9a9da0;">7 days ago</div>
<div class="a" style="left:1347px;top:799px;width:1156px;height:2px;background:#eef0f1"></div>
<svg style="left:1387.8px;top:816px" width="48.5" height="48.5"><use href="#man" width="48.5" height="48.5"/></svg>
<svg style="left:1452px;top:832px" width="22" height="17" viewBox="0 0 22 17"><path d="M3.5 8.5 H17 M12 3 L17.5 8.5 L12 14" fill="none" stroke="#4a97f0" stroke-width="3.2" stroke-linecap="round" stroke-linejoin="round"/></svg>
<div class="t" style="left:1488.0px;top:828.9px;font-size:22.5px;letter-spacing:-0.60px;font-weight:700;color:#141414;">Ditte Larsen</div>
<div class="t" style="left:1616.6px;top:828.9px;font-size:22.5px;letter-spacing:0.09px;color:#2a2a2a;">qualified the candidate for</div>
<div class="t" style="left:1884.2px;top:828.9px;font-size:22.5px;letter-spacing:-0.75px;font-weight:700;color:#141414;">Applied</div>
<div class="t" style="left:2365.2px;top:831.4px;font-size:19.5px;letter-spacing:-0.75px;color:#9a9da0;">11 days ago</div>
<div class="a" style="left:1347px;top:882px;width:1156px;height:2px;background:#eef0f1"></div>
<svg style="left:1387.8px;top:899px" width="48.5" height="48.5"><use href="#man" width="48.5" height="48.5"/></svg>
<svg style="left:1452px;top:915px" width="22" height="17" viewBox="0 0 22 17"><path d="M3.5 8.5 H17 M12 3 L17.5 8.5 L12 14" fill="none" stroke="#4a97f0" stroke-width="3.2" stroke-linecap="round" stroke-linejoin="round"/></svg>
<div class="t" style="left:1488.0px;top:911.9px;font-size:22.5px;letter-spacing:-0.60px;font-weight:700;color:#141414;">Ditte Larsen</div>
<div class="t" style="left:1616.6px;top:911.9px;font-size:22.5px;letter-spacing:0.09px;color:#2a2a2a;">qualified the candidate for</div>
<div class="t" style="left:1884.2px;top:911.9px;font-size:22.5px;letter-spacing:-0.75px;font-weight:700;color:#141414;">Applied</div>
<div class="t" style="left:2365.2px;top:914.4px;font-size:19.5px;letter-spacing:-0.75px;color:#9a9da0;">11 days ago</div>
<div class="card" style="left:1347px;top:1008px;width:1156px;height:159px"></div>
<div class="a" style="left:1351px;top:1011px;width:55px;height:55px;background:#a7aaac;border-radius:5px 0 0 5px"></div>
<div class="a" style="left:1409px;top:1011px;width:55px;height:55px;background:#a7aaac"></div>
<div class="a" style="left:1468px;top:1011px;width:55px;height:55px;background:#a7aaac"></div>
<div class="a" style="left:1526px;top:1011px;width:818px;height:55px;background:#4e96f1;border-radius:0 5px 5px 0"></div>
<svg style="left:1368px;top:1028.5px" width="20" height="20" viewBox="0 0 20 20"><g transform="rotate(180 10 10)"><use href="#thu" width="20" height="20"/></g></svg>
<svg style="left:1485px;top:1028.5px" width="20" height="20" viewBox="0 0 20 20"><use href="#thu" width="20" height="20"/></svg>
<svg style="left:1426px;top:1028px" width="22" height="22" viewBox="0 0 22 22"><use href="#thu" x="0" y="0" width="11" height="12"/><g transform="rotate(180 16 15)"><use href="#thu" x="10.5" y="9" width="11" height="12"/></g></svg>
<div class="a" style="left:1406px;top:1068px;width:3px;height:96px;background:repeating-linear-gradient(180deg,#d6d9db 0 5px,transparent 5px 9px)"></div>
<div class="a" style="left:1464.5px;top:1068px;width:3px;height:96px;background:repeating-linear-gradient(180deg,#d6d9db 0 5px,transparent 5px 9px)"></div>
<div class="a" style="left:1523px;top:1068px;width:3px;height:96px;background:repeating-linear-gradient(180deg,#d6d9db 0 5px,transparent 5px 9px)"></div>
<div class="t" style="left:1368.0px;top:1102.9px;font-size:31.0px;letter-spacing:39.00px;color:#c9cccf;-webkit-text-stroke:1px #fff">0</div>
<div class="t" style="left:1426.5px;top:1102.9px;font-size:31.0px;letter-spacing:39.00px;color:#c9cccf;-webkit-text-stroke:1px #fff">0</div>
<div class="t" style="left:1485.0px;top:1102.9px;font-size:31.0px;letter-spacing:39.00px;color:#c9cccf;-webkit-text-stroke:1px #fff">0</div>
<svg style="left:1870px;top:1029px" width="21" height="21" viewBox="0 0 21 21"><rect x="0" y="0" width="20.5" height="20.5" rx="3.5" fill="#fff"/><path d="M10.25 3.2 L12.2 8.3 L17.5 8.5 L13.3 11.8 L14.8 17 L10.25 14 L5.7 17 L7.2 11.8 L3 8.5 L8.3 8.3 Z" fill="#4e96f1"/></svg>
<div class="t" style="left:1906.7px;top:1029.8px;font-size:22.0px;letter-spacing:-0.59px;font-weight:700;color:#fff;">Excellent</div>
<div class="a" style="left:1871px;top:1084.5px;width:64px;height:64px;background:#ddedfb;border-radius:50%"></div>
<div class="t" style="left:1884.0px;top:1107.4px;font-size:24.0px;letter-spacing:0.50px;font-weight:700;color:#1f3f69;">GA</div>
<svg style="left:1936px;top:1084.5px" width="64.5" height="64.5"><use href="#man" width="64.5" height="64.5"/></svg>
<div class="a" style="left:2348px;top:1011px;width:152px;height:153px;background:#66b1a0;border-radius:5px"></div>
<svg style="left:2404px;top:1043px" width="39" height="40" viewBox="0 0 20 20"><use href="#thu" width="20" height="20"/></svg>
<div class="t" style="left:2387.0px;top:1093.9px;font-size:46.0px;letter-spacing:-2.10px;color:#fff;transform:scaleX(0.84);transform-origin:0 0;-webkit-text-stroke:1.2px #66b1a0">91%</div>
<div class="card" style="left:1347px;top:1211px;width:1156px;height:426px;overflow:hidden"></div>
<div class="card" style="left:1347px;top:1681px;width:1156px;height:94px;border-radius:3px 3px 0 0"></div>
<div class="a" style="left:1347px;top:1762px;width:1156px;height:2px;background:#eef0f1"></div>
<div class="t" style="left:1387.3px;top:1712.1px;font-size:22.0px;letter-spacing:-0.86px;font-weight:700;color:#141414;">Jobs</div>
<svg style="left:1347px;top:1211px" width="1156" height="426" viewBox="1347 1211 1156 426" overflow="hidden"><defs><clipPath id="mapc"><rect x="1347" y="1211" width="1156" height="426" rx="3"/></clipPath></defs><g clip-path="url(#mapc)"><rect x="1347" y="1211" width="1156" height="426" fill="#eceee9"/><path d="M1835 1212 L2230 1212 L2215 1300 L2195 1390 L2120 1460 L2040 1470 L1960 1486 L1900 1520 L1860 1545 L1830 1530 L1850 1470 L1860 1420 L1830 1390 L1800 1370 L1830 1330 L1860 1290 Z" fill="#e7e8eb"/><ellipse cx="1610" cy="1415" rx="45" ry="30" fill="#e7e8eb"/><ellipse cx="1705" cy="1390" rx="35" ry="18" fill="#e7e8eb"/><path d="M1760 1560 L1800 1490 L1850 1470 L1870 1500 L1820 1580 L1790 1637 L1750 1637 Z" fill="#e7e8eb"/><path d="M2130 1460 L2210 1450 L2300 1470 L2290 1540 L2220 1580 L2160 1560 L2120 1500 Z" fill="#e6e7e3"/><ellipse cx="1380" cy="1250" rx="20" ry="12" fill="#d5e8cf"/><ellipse cx="1395" cy="1300" rx="14" ry="20" fill="#d5e8cf"/><ellipse cx="1380" cy="1470" rx="25" ry="30" fill="#d5e8cf"/><ellipse cx="1420" cy="1560" rx="22" ry="35" fill="#d5e8cf"/><ellipse cx="1370" cy="1600" rx="20" ry="25" fill="#d5e8cf"/><ellipse cx="1450" cy="1440" rx="18" ry="12" fill="#d5e8cf"/><ellipse cx="1530" cy="1310" rx="28" ry="16" fill="#d5e8cf"/><ellipse cx="1552" cy="1350" rx="16" ry="14" fill="#d5e8cf"/><ellipse cx="1560" cy="1470" rx="12" ry="18" fill="#d5e8cf"/><ellipse cx="1690" cy="1480" rx="14" ry="10" fill="#d5e8cf"/><ellipse cx="1740" cy="1440" rx="10" ry="14" fill="#d5e8cf"/><ellipse cx="1790" cy="1300" rx="14" ry="10" fill="#d5e8cf"/><ellipse cx="1870" cy="1250" rx="18" ry="12" fill="#d5e8cf"/><ellipse cx="1880" cy="1300" rx="14" ry="16" fill="#d5e8cf"/><ellipse cx="1930" cy="1280" rx="30" ry="20" fill="#d5e8cf"/><ellipse cx="1975" cy="1340" rx="20" ry="14" fill="#d5e8cf"/><ellipse cx="2000" cy="1430" rx="16" ry="12" fill="#d5e8cf"/><ellipse cx="2060" cy="1470" rx="12" ry="8" fill="#d5e8cf"/><ellipse cx="2130" cy="1500" rx="18" ry="25" fill="#d5e8cf"/><ellipse cx="2180" cy="1540" rx="20" ry="18" fill="#d5e8cf"/><ellipse cx="2240" cy="1500" rx="14" ry="12" fill="#d5e8cf"/><ellipse cx="1700" cy="1270" rx="12" ry="8" fill="#d5e8cf"/><ellipse cx="1480" cy="1400" rx="10" ry="8" fill="#d5e8cf"/><ellipse cx="1850" cy="1440" rx="10" ry="8" fill="#d5e8cf"/><path d="M1656 1276 Q1652 1282 1647 1292" stroke="#fff" stroke-width="1.5" fill="none"/><path d="M1429 1390 Q1436 1404 1458 1417" stroke="#fff" stroke-width="1.5" fill="none"/><path d="M1948 1460 Q1961 1459 1989 1468" stroke="#fff" stroke-width="2.5" fill="none"/><path d="M2165 1335 Q2171 1345 2183 1344" stroke="#fff" stroke-width="1.5" fill="none"/><path d="M1445 1455 Q1457 1461 1461 1466" stroke="#fff" stroke-width="2.5" fill="none"/><path d="M1543 1501 Q1548 1515 1550 1530" stroke="#fff" stroke-width="2" fill="none"/><path d="M2090 1247 Q2099 1261 2112 1277" stroke="#fff" stroke-width="2.5" fill="none"/><path d="M1745 1534 Q1755 1545 1778 1551" stroke="#fff" stroke-width="2.5" fill="none"/><path d="M1646 1508 Q1639 1533 1634 1547" stroke="#fff" stroke-width="2" fill="none"/><path d="M1799 1494 Q1824 1507 1845 1503" stroke="#fff" stroke-width="2" fill="none"/><path d="M1618 1376 Q1614 1378 1610 1390" stroke="#fff" stroke-width="1.5" fill="none"/><path d="M1817 1305 Q1831 1330 1847 1343" stroke="#fff" stroke-width="2" fill="none"/><path d="M1424 1403 Q1425 1436 1415 1457" stroke="#fff" stroke-width="2" fill="none"/><path d="M1998 1374 Q1999 1382 2012 1386" stroke="#fff" stroke-width="1.5" fill="none"/><path d="M1809 1462 Q1813 1466 1819 1474" stroke="#fff" stroke-width="2.5" fill="none"/><path d="M1651 1265 Q1627 1282 1598 1290" stroke="#fff" stroke-width="2" fill="none"/><path d="M2204 1543 Q2179 1552 2157 1563" stroke="#fff" stroke-width="1.5" fill="none"/><path d="M1806 1382 Q1829 1393 1855 1416" stroke="#fff" stroke-width="2.5" fill="none"/><path d="M1397 1212 Q1404 1209 1415 1221" stroke="#fff" stroke-width="1.5" fill="none"/><path d="M1932 1275 Q1941 1280 1954 1297" stroke="#fff" stroke-width="2" fill="none"/><path d="M2293 1410 Q2288 1417 2294 1429" stroke="#fff" stroke-width="2" fill="none"/><path d="M1803 1506 Q1810 1516 1802 1530" stroke="#fff" stroke-width="2.5" fill="none"/><path d="M1865 1223 Q1868 1256 1859 1282" stroke="#fff" stroke-width="2" fill="none"/><path d="M1841 1598 Q1847 1609 1852 1621" stroke="#fff" stroke-width="2.5" fill="none"/><path d="M1560 1557 Q1538 1563 1506 1559" stroke="#fff" stroke-width="2.5" fill="none"/><path d="M2113 1297 Q2121 1326 2114 1345" stroke="#fff" stroke-width="2" fill="none"/><path d="M1594 1506 Q1584 1517 1559 1511" stroke="#fff" stroke-width="2" fill="none"/><path d="M1424 1255 Q1425 1278 1427 1285" stroke="#fff" stroke-width="2.5" fill="none"/><path d="M2148 1416 Q2130 1441 2124 1461" stroke="#fff" stroke-width="2" fill="none"/><path d="M2093 1531 Q2098 1540 2094 1554" stroke="#fff" stroke-width="2.5" fill="none"/><path d="M1724 1383 Q1695 1381 1677 1391" stroke="#fff" stroke-width="1.5" fill="none"/><path d="M1910 1410 Q1902 1428 1890 1447" stroke="#fff" stroke-width="2" fill="none"/><path d="M1496 1445 Q1525 1440 1546 1448" stroke="#fff" stroke-width="2.5" fill="none"/><path d="M1906 1322 Q1915 1330 1911 1342" stroke="#fff" stroke-width="2" fill="none"/><path d="M1978 1558 Q1983 1579 1976 1611" stroke="#fff" stroke-width="1.5" fill="none"/><path d="M1846 1220 Q1840 1236 1850 1243" stroke="#fff" stroke-width="1.5" fill="none"/><path d="M1482 1475 Q1493 1479 1498 1482" stroke="#fff" stroke-width="2" fill="none"/><path d="M2094 1257 Q2088 1274 2089 1283" stroke="#fff" stroke-width="2.5" fill="none"/><path d="M1778 1224 Q1767 1234 1761 1230" stroke="#fff" stroke-width="2.5" fill="none"/><path d="M1835 1506 Q1838 1533 1841 1545" stroke="#fff" stroke-width="2.5" fill="none"/><path d="M1846 1584 Q1824 1586 1791 1597" stroke="#fff" stroke-width="2" fill="none"/><path d="M1768 1243 Q1778 1254 1782 1255" stroke="#fff" stroke-width="1.5" fill="none"/><path d="M2242 1485 Q2242 1497 2253 1510" stroke="#fff" stroke-width="2.5" fill="none"/><path d="M1811 1633 Q1801 1639 1792 1644" stroke="#fff" stroke-width="2" fill="none"/><path d="M1748 1364 Q1761 1367 1779 1373" stroke="#fff" stroke-width="2.5" fill="none"/><path d="M1364 1353 Q1350 1378 1350 1388" stroke="#fff" stroke-width="1.5" fill="none"/><path d="M2089 1327 Q2112 1339 2121 1340" stroke="#fff" stroke-width="2" fill="none"/><path d="M1734 1440 Q1730 1455 1732 1477" stroke="#fff" stroke-width="2.5" fill="none"/><path d="M1522 1592 Q1520 1595 1532 1604" stroke="#fff" stroke-width="2.5" fill="none"/><path d="M2163 1240 Q2144 1249 2131 1255" stroke="#fff" stroke-width="2" fill="none"/><path d="M1939 1230 Q1929 1249 1904 1276" stroke="#fff" stroke-width="1.5" fill="none"/><path d="M1638 1535 Q1644 1547 1661 1564" stroke="#fff" stroke-width="1.5" fill="none"/><path d="M1365 1427 Q1341 1427 1327 1430" stroke="#fff" stroke-width="2.5" fill="none"/><path d="M2127 1396 Q2126 1422 2128 1448" stroke="#fff" stroke-width="2.5" fill="none"/><path d="M1536 1587 Q1537 1603 1522 1603" stroke="#fff" stroke-width="1.5" fill="none"/><path d="M1361 1478 Q1337 1487 1329 1490" stroke="#fff" stroke-width="2" fill="none"/><path d="M2177 1497 Q2182 1506 2193 1517" stroke="#fff" stroke-width="1.5" fill="none"/><path d="M1694 1352 Q1672 1359 1665 1353" stroke="#fff" stroke-width="1.5" fill="none"/><path d="M1687 1212 Q1693 1225 1700 1246" stroke="#fff" stroke-width="2.5" fill="none"/><path d="M2087 1251 Q2079 1255 2069 1262" stroke="#fff" stroke-width="2" fill="none"/><path d="M1905 1437 Q1893 1459 1873 1468" stroke="#fff" stroke-width="2" fill="none"/><path d="M2075 1518 Q2078 1526 2076 1546" stroke="#fff" stroke-width="2.5" fill="none"/><path d="M2197 1479 Q2174 1498 2162 1517" stroke="#fff" stroke-width="2.5" fill="none"/><path d="M1889 1557 Q1916 1562 1935 1560" stroke="#fff" stroke-width="2.5" fill="none"/><path d="M1960 1248 Q1989 1249 2003 1254" stroke="#fff" stroke-width="2" fill="none"/><path d="M1879 1479 Q1870 1492 1862 1521" stroke="#fff" stroke-width="1.5" fill="none"/><path d="M2060 1426 Q2051 1452 2055 1470" stroke="#fff" stroke-width="2" fill="none"/><path d="M1571 1533 Q1587 1554 1604 1563" stroke="#fff" stroke-width="1.5" fill="none"/><path d="M1803 1503 Q1790 1510 1772 1531" stroke="#fff" stroke-width="1.5" fill="none"/><path d="M1663 1489 Q1645 1506 1639 1524" stroke="#fff" stroke-width="2" fill="none"/><path d="M1603 1498 Q1587 1517 1577 1535" stroke="#fff" stroke-width="2" fill="none"/><path d="M1791 1538 Q1768 1532 1751 1539" stroke="#fff" stroke-width="2" fill="none"/><path d="M1364 1407 Q1338 1419 1314 1438" stroke="#fff" stroke-width="1.5" fill="none"/><path d="M1418 1250 Q1406 1262 1399 1269" stroke="#fff" stroke-width="2.5" fill="none"/><path d="M1832 1589 Q1831 1599 1817 1609" stroke="#fff" stroke-width="1.5" fill="none"/><path d="M1499 1616 Q1493 1628 1481 1644" stroke="#fff" stroke-width="2" fill="none"/><path d="M1648 1569 Q1678 1563 1697 1569" stroke="#fff" stroke-width="1.5" fill="none"/><path d="M1623 1370 Q1635 1396 1643 1427" stroke="#fff" stroke-width="2" fill="none"/><path d="M1978 1482 Q2003 1492 2030 1508" stroke="#fff" stroke-width="2" fill="none"/><path d="M2095 1394 Q2118 1402 2144 1398" stroke="#fff" stroke-width="2.5" fill="none"/><path d="M1870 1518 Q1893 1526 1918 1525" stroke="#fff" stroke-width="2.5" fill="none"/><path d="M2176 1418 Q2151 1422 2137 1429" stroke="#fff" stroke-width="2" fill="none"/><path d="M1631 1526 Q1620 1524 1604 1528" stroke="#fff" stroke-width="2.5" fill="none"/><path d="M1984 1263 Q1980 1276 1976 1279" stroke="#fff" stroke-width="2.5" fill="none"/><path d="M1557 1597 Q1533 1592 1521 1598" stroke="#fff" stroke-width="1.5" fill="none"/><path d="M1513 1448 Q1527 1457 1530 1475" stroke="#fff" stroke-width="1.5" fill="none"/><path d="M2061 1387 Q2065 1403 2072 1425" stroke="#fff" stroke-width="1.5" fill="none"/><path d="M1822 1456 Q1832 1481 1841 1498" stroke="#fff" stroke-width="1.5" fill="none"/><path d="M1435 1593 Q1442 1611 1451 1634" stroke="#fff" stroke-width="1.5" fill="none"/><path d="M1468 1393 Q1457 1410 1431 1427" stroke="#fff" stroke-width="1.5" fill="none"/><path d="M1720 1606 Q1705 1616 1674 1634" stroke="#fff" stroke-width="1.5" fill="none"/><path d="M2134 1510 Q2102 1527 2085 1536" stroke="#fff" stroke-width="1.5" fill="none"/><path d="M2093 1311 Q2068 1310 2050 1322" stroke="#fff" stroke-width="2" fill="none"/><path d="M1850 1398 Q1840 1412 1836 1411" stroke="#fff" stroke-width="1.5" fill="none"/><path d="M1717 1307 Q1711 1314 1712 1322" stroke="#fff" stroke-width="2" fill="none"/><path d="M1800 1312 Q1824 1329 1842 1353" stroke="#fff" stroke-width="1.5" fill="none"/><path d="M1532 1588 Q1523 1595 1524 1605" stroke="#fff" stroke-width="2" fill="none"/><path d="M1669 1391 Q1667 1405 1656 1411" stroke="#fff" stroke-width="2.5" fill="none"/><path d="M1411 1423 Q1426 1437 1451 1452" stroke="#fff" stroke-width="2" fill="none"/><path d="M2072 1337 Q2048 1336 2035 1343" stroke="#fff" stroke-width="2" fill="none"/><path d="M1399 1222 Q1397 1233 1389 1254" stroke="#fff" stroke-width="2" fill="none"/><path d="M1524 1610 Q1521 1614 1512 1622" stroke="#fff" stroke-width="2" fill="none"/><path d="M2286 1400 Q2288 1402 2303 1406" stroke="#fff" stroke-width="1.5" fill="none"/><path d="M1882 1534 Q1888 1562 1900 1581" stroke="#fff" stroke-width="1.5" fill="none"/><path d="M1394 1413 Q1400 1437 1416 1465" stroke="#fff" stroke-width="2" fill="none"/><path d="M1376 1387 Q1348 1393 1335 1414" stroke="#fff" stroke-width="1.5" fill="none"/><path d="M2113 1238 Q2122 1241 2127 1249" stroke="#fff" stroke-width="2" fill="none"/><path d="M2260 1474 Q2273 1488 2292 1509" stroke="#fff" stroke-width="1.5" fill="none"/><path d="M2100 1366 L2112 1369" stroke="#fff" stroke-width="2" fill="none"/><path d="M2183 1312 L2184 1326" stroke="#fff" stroke-width="2" fill="none"/><path d="M2136 1411 L2140 1441" stroke="#fff" stroke-width="1.5" fill="none"/><path d="M2024 1313 L2026 1337" stroke="#fff" stroke-width="2" fill="none"/><path d="M1898 1322 L1910 1318" stroke="#fff" stroke-width="2" fill="none"/><path d="M2196 1463 L2198 1479" stroke="#fff" stroke-width="1.5" fill="none"/><path d="M2121 1288 L2123 1303" stroke="#fff" stroke-width="1.5" fill="none"/><path d="M1907 1273 L1926 1269" stroke="#fff" stroke-width="1.5" fill="none"/><path d="M2023 1272 L2032 1274" stroke="#fff" stroke-width="1.5" fill="none"/><path d="M2143 1448 L2166 1439" stroke="#fff" stroke-width="1.5" fill="none"/><path d="M2175 1308 L2198 1333" stroke="#fff" stroke-width="1.5" fill="none"/><path d="M2069 1395 L2084 1393" stroke="#fff" stroke-width="2" fill="none"/><path d="M1854 1401 L1848 1427" stroke="#fff" stroke-width="1.5" fill="none"/><path d="M2064 1232 L2064 1245" stroke="#fff" stroke-width="2" fill="none"/><path d="M2079 1252 L2077 1272" stroke="#fff" stroke-width="2" fill="none"/><path d="M2080 1320 L2077 1340" stroke="#fff" stroke-width="2" fill="none"/><path d="M2072 1313 L2093 1311" stroke="#fff" stroke-width="1.5" fill="none"/><path d="M1986 1440 L2000 1440" stroke="#fff" stroke-width="2" fill="none"/><path d="M1872 1373 L1872 1387" stroke="#fff" stroke-width="1.5" fill="none"/><path d="M2173 1240 L2191 1240" stroke="#fff" stroke-width="1.5" fill="none"/><path d="M1859 1451 L1885 1449" stroke="#fff" stroke-width="1.5" fill="none"/><path d="M2064 1371 L2083 1366" stroke="#fff" stroke-width="1.5" fill="none"/><path d="M1978 1244 L2010 1237" stroke="#fff" stroke-width="1.5" fill="none"/><path d="M2080 1296 L2082 1322" stroke="#fff" stroke-width="2" fill="none"/><path d="M2050 1322 L2060 1323" stroke="#fff" stroke-width="2" fill="none"/><path d="M2007 1327 L2003 1347" stroke="#fff" stroke-width="1.5" fill="none"/><path d="M1886 1323 L1897 1320" stroke="#fff" stroke-width="1.5" fill="none"/><path d="M1870 1401 L1902 1407" stroke="#fff" stroke-width="1.5" fill="none"/><path d="M1849 1229 L1884 1232" stroke="#fff" stroke-width="2" fill="none"/><path d="M1944 1421 L1955 1424" stroke="#fff" stroke-width="2" fill="none"/><path d="M2060 1277 L2059 1291" stroke="#fff" stroke-width="2" fill="none"/><path d="M1915 1280 L1935 1280" stroke="#fff" stroke-width="2" fill="none"/><path d="M2085 1443 L2095 1447" stroke="#fff" stroke-width="2" fill="none"/><path d="M2188 1329 L2184 1363" stroke="#fff" stroke-width="2" fill="none"/><path d="M2106 1308 L2109 1337" stroke="#fff" stroke-width="2" fill="none"/><path d="M1923 1371 L1927 1396" stroke="#fff" stroke-width="2" fill="none"/><path d="M2104 1405 L2108 1427" stroke="#fff" stroke-width="1.5" fill="none"/><path d="M1888 1271 L1894 1287" stroke="#fff" stroke-width="2" fill="none"/><path d="M2032 1319 L2036 1332" stroke="#fff" stroke-width="1.5" fill="none"/><path d="M2177 1275 L2165 1302" stroke="#fff" stroke-width="2" fill="none"/><path d="M2132 1462 L2108 1470" stroke="#fff" stroke-width="2" fill="none"/><path d="M2057 1346 L2080 1345" stroke="#fff" stroke-width="2" fill="none"/><path d="M1907 1253 L1895 1285" stroke="#fff" stroke-width="1.5" fill="none"/><path d="M1989 1346 L1993 1360" stroke="#fff" stroke-width="2" fill="none"/><path d="M1863 1373 L1864 1384" stroke="#fff" stroke-width="2" fill="none"/><path d="M2108 1332 L2124 1335" stroke="#fff" stroke-width="1.5" fill="none"/><path d="M1884 1442 L1900 1448" stroke="#fff" stroke-width="2" fill="none"/><path d="M2087 1449 L2098 1453" stroke="#fff" stroke-width="1.5" fill="none"/><path d="M1901 1445 L1904 1460" stroke="#fff" stroke-width="2" fill="none"/><path d="M1958 1274 L1941 1299" stroke="#fff" stroke-width="2" fill="none"/><path d="M2010 1349 L2032 1340" stroke="#fff" stroke-width="2" fill="none"/><path d="M2124 1313 L2135 1314" stroke="#fff" stroke-width="1.5" fill="none"/><path d="M2064 1254 L2089 1264" stroke="#fff" stroke-width="1.5" fill="none"/><path d="M2091 1402 L2104 1431" stroke="#fff" stroke-width="1.5" fill="none"/><path d="M2157 1407 L2169 1409" stroke="#fff" stroke-width="1.5" fill="none"/><path d="M2182 1447 L2170 1459" stroke="#fff" stroke-width="1.5" fill="none"/><path d="M1888 1416 L1889 1427" stroke="#fff" stroke-width="2" fill="none"/><path d="M2175 1224 L2158 1239" stroke="#fff" stroke-width="2" fill="none"/><path d="M2063 1220 L2064 1242" stroke="#fff" stroke-width="1.5" fill="none"/><path d="M2034 1268 L2054 1274" stroke="#fff" stroke-width="1.5" fill="none"/><path d="M1944 1406 L1972 1414" stroke="#fff" stroke-width="1.5" fill="none"/><path d="M2188 1365 L2204 1371" stroke="#fff" stroke-width="1.5" fill="none"/><path d="M2178 1272 L2169 1300" stroke="#fff" stroke-width="1.5" fill="none"/><path d="M2066 1304 L2087 1302" stroke="#fff" stroke-width="1.5" fill="none"/><path d="M1974 1290 L1988 1298" stroke="#fff" stroke-width="2" fill="none"/><path d="M1886 1365 L1904 1367" stroke="#fff" stroke-width="1.5" fill="none"/><path d="M2152 1328 L2156 1357" stroke="#fff" stroke-width="1.5" fill="none"/><path d="M1885 1331 L1891 1359" stroke="#fff" stroke-width="1.5" fill="none"/><path d="M2100 1463 L2118 1467" stroke="#fff" stroke-width="1.5" fill="none"/><path d="M1933 1458 L1951 1466" stroke="#fff" stroke-width="1.5" fill="none"/><path d="M2126 1401 L2143 1400" stroke="#fff" stroke-width="2" fill="none"/><path d="M2007 1215 L2020 1226" stroke="#fff" stroke-width="1.5" fill="none"/><path d="M1891 1368 L1887 1395" stroke="#fff" stroke-width="2" fill="none"/><path d="M2145 1384 L2131 1413" stroke="#fff" stroke-width="1.5" fill="none"/><path d="M2071 1329 L2070 1345" stroke="#fff" stroke-width="2" fill="none"/><path d="M2097 1374 L2101 1406" stroke="#fff" stroke-width="1.5" fill="none"/><path d="M2162 1297 L2172 1292" stroke="#fff" stroke-width="1.5" fill="none"/><path d="M1898 1414 L1918 1420" stroke="#fff" stroke-width="1.5" fill="none"/><path d="M2098 1344 L2092 1372" stroke="#fff" stroke-width="2" fill="none"/><path d="M1916 1389 L1933 1396" stroke="#fff" stroke-width="1.5" fill="none"/><path d="M1931 1311 L1904 1318" stroke="#fff" stroke-width="2" fill="none"/><path d="M2049 1240 L2083 1235" stroke="#fff" stroke-width="2" fill="none"/><path d="M2006 1254 L2027 1262" stroke="#fff" stroke-width="1.5" fill="none"/><path d="M2133 1250 L2129 1271" stroke="#fff" stroke-width="2" fill="none"/><path d="M2114 1380 L2130 1383" stroke="#fff" stroke-width="2" fill="none"/><path d="M2087 1466 L2088 1485" stroke="#fff" stroke-width="2" fill="none"/><path d="M1955 1337 L1988 1340" stroke="#fff" stroke-width="2" fill="none"/><path d="M1861 1426 L1856 1451" stroke="#fff" stroke-width="1.5" fill="none"/><path d="M2077 1266 L2072 1279" stroke="#fff" stroke-width="1.5" fill="none"/><path d="M1907 1329 L1911 1342" stroke="#fff" stroke-width="1.5" fill="none"/><path d="M2081 1443 L2093 1452" stroke="#fff" stroke-width="1.5" fill="none"/><path d="M2107 1325 L2136 1334" stroke="#fff" stroke-width="2" fill="none"/><path d="M2018 1227 L2021 1241" stroke="#fff" stroke-width="1.5" fill="none"/><path d="M1898 1295 L1898 1314" stroke="#fff" stroke-width="2" fill="none"/><path d="M1905 1305 L1938 1310" stroke="#fff" stroke-width="2" fill="none"/><path d="M2131 1236 L2159 1236" stroke="#fff" stroke-width="1.5" fill="none"/><path d="M1962 1434 L1979 1432" stroke="#fff" stroke-width="2" fill="none"/><path d="M1992 1355 L1995 1373" stroke="#fff" stroke-width="2" fill="none"/><path d="M2154 1301 L2172 1297" stroke="#fff" stroke-width="2" fill="none"/><path d="M1886 1463 L1896 1493" stroke="#fff" stroke-width="1.5" fill="none"/><path d="M1983 1240 L1984 1251" stroke="#fff" stroke-width="2" fill="none"/><path d="M2062 1374 L2073 1375" stroke="#fff" stroke-width="2" fill="none"/><path d="M2065 1257 L2098 1261" stroke="#fff" stroke-width="1.5" fill="none"/><path d="M1973 1424 L1972 1439" stroke="#fff" stroke-width="1.5" fill="none"/><path d="M1955 1323 L1977 1327" stroke="#fff" stroke-width="1.5" fill="none"/><path d="M2119 1321 L2138 1325" stroke="#fff" stroke-width="1.5" fill="none"/><path d="M2011 1318 L2036 1310" stroke="#fff" stroke-width="2" fill="none"/><path d="M1842 1388 L1854 1384" stroke="#fff" stroke-width="1.5" fill="none"/><path d="M1939 1359 L1935 1388" stroke="#fff" stroke-width="1.5" fill="none"/><path d="M2103 1234 L2099 1266" stroke="#fff" stroke-width="1.5" fill="none"/><path d="M2098 1215 L2116 1207" stroke="#fff" stroke-width="2" fill="none"/><path d="M2103 1255 L2104 1289" stroke="#fff" stroke-width="2" fill="none"/><path d="M2009 1255 L2033 1264" stroke="#fff" stroke-width="2" fill="none"/><path d="M2012 1413 L2015 1430" stroke="#fff" stroke-width="1.5" fill="none"/><path d="M2064 1380 L2032 1394" stroke="#fff" stroke-width="1.5" fill="none"/><path d="M2056 1292 L2064 1310" stroke="#fff" stroke-width="1.5" fill="none"/><path d="M2131 1285 L2139 1317" stroke="#fff" stroke-width="1.5" fill="none"/><path d="M1944 1248 L1968 1260" stroke="#fff" stroke-width="2" fill="none"/><path d="M1965 1234 L1992 1254" stroke="#fff" stroke-width="1.5" fill="none"/><path d="M1951 1227 L1923 1234" stroke="#fff" stroke-width="2" fill="none"/><path d="M2005 1235 L2023 1250" stroke="#fff" stroke-width="2" fill="none"/><path d="M2159 1347 L2171 1346" stroke="#fff" stroke-width="2" fill="none"/><path d="M1971 1358 L2004 1355" stroke="#fff" stroke-width="2" fill="none"/><path d="M1975 1239 L1984 1244" stroke="#fff" stroke-width="2" fill="none"/><path d="M2027 1217 L2019 1241" stroke="#fff" stroke-width="1.5" fill="none"/><path d="M1934 1413 L1909 1436" stroke="#fff" stroke-width="2" fill="none"/><path d="M2144 1299 L2166 1309" stroke="#fff" stroke-width="2" fill="none"/><path d="M2015 1430 L2042 1439" stroke="#fff" stroke-width="1.5" fill="none"/><path d="M1933 1358 L1928 1372" stroke="#fff" stroke-width="1.5" fill="none"/><path d="M1974 1273 L1976 1284" stroke="#fff" stroke-width="1.5" fill="none"/><path d="M2141 1224 L2140 1235" stroke="#fff" stroke-width="1.5" fill="none"/><path d="M1954 1213 L1950 1242" stroke="#fff" stroke-width="1.5" fill="none"/><path d="M2009 1308 L2011 1324" stroke="#fff" stroke-width="1.5" fill="none"/><path d="M2169 1442 L2202 1441" stroke="#fff" stroke-width="1.5" fill="none"/><path d="M1868 1372 L1901 1368" stroke="#fff" stroke-width="2" fill="none"/><path d="M2143 1374 L2145 1387" stroke="#fff" stroke-width="2" fill="none"/><path d="M1891 1269 L1911 1262" stroke="#fff" stroke-width="1.5" fill="none"/><path d="M1936 1318 L1941 1348" stroke="#fff" stroke-width="2" fill="none"/><path d="M2017 1294 L2041 1302" stroke="#fff" stroke-width="1.5" fill="none"/><path d="M2042 1428 L2036 1462" stroke="#fff" stroke-width="1.5" fill="none"/><path d="M2173 1237 L2207 1243" stroke="#fff" stroke-width="1.5" fill="none"/><path d="M2131 1300 L2116 1309" stroke="#fff" stroke-width="2" fill="none"/><path d="M1997 1447 L2019 1442" stroke="#fff" stroke-width="1.5" fill="none"/><path d="M2096 1263 L2105 1290" stroke="#fff" stroke-width="1.5" fill="none"/><path d="M1914 1370 L1924 1372" stroke="#fff" stroke-width="2" fill="none"/><path d="M2143 1448 L2163 1473" stroke="#fff" stroke-width="2" fill="none"/><path d="M1873 1318 L1887 1321" stroke="#fff" stroke-width="2" fill="none"/><path d="M1853 1393 L1845 1427" stroke="#fff" stroke-width="1.5" fill="none"/><path d="M1883 1396 L1900 1423" stroke="#fff" stroke-width="1.5" fill="none"/><path d="M1945 1240 L1958 1241" stroke="#fff" stroke-width="1.5" fill="none"/><path d="M2188 1270 L2198 1267" stroke="#fff" stroke-width="1.5" fill="none"/><path d="M1934 1428 L1935 1441" stroke="#fff" stroke-width="1.5" fill="none"/><path d="M2098 1224 L2098 1236" stroke="#fff" stroke-width="1.5" fill="none"/><path d="M1986 1247 L2005 1257" stroke="#fff" stroke-width="2" fill="none"/><path d="M1899 1425 L1905 1448" stroke="#fff" stroke-width="2" fill="none"/><path d="M2189 1225 L2171 1236" stroke="#fff" stroke-width="2" fill="none"/><path d="M2133 1431 L2134 1447" stroke="#fff" stroke-width="2" fill="none"/><path d="M2079 1215 L2100 1208" stroke="#fff" stroke-width="1.5" fill="none"/><path d="M1921 1321 L1951 1318" stroke="#fff" stroke-width="1.5" fill="none"/><path d="M1852 1378 L1872 1400" stroke="#fff" stroke-width="1.5" fill="none"/><path d="M2064 1277 L2065 1289" stroke="#fff" stroke-width="2" fill="none"/><path d="M2073 1243 L2070 1255" stroke="#fff" stroke-width="1.5" fill="none"/><path d="M1998 1344 L1994 1360" stroke="#fff" stroke-width="1.5" fill="none"/><path d="M2107 1286 L2105 1301" stroke="#fff" stroke-width="2" fill="none"/><path d="M2006 1353 L2024 1355" stroke="#fff" stroke-width="1.5" fill="none"/><path d="M2024 1311 L2043 1312" stroke="#fff" stroke-width="2" fill="none"/><path d="M2017 1285 L2039 1295" stroke="#fff" stroke-width="2" fill="none"/><path d="M1998 1228 L2021 1226" stroke="#fff" stroke-width="1.5" fill="none"/><path d="M1990 1384 L1997 1414" stroke="#fff" stroke-width="1.5" fill="none"/><path d="M2106 1404 L2086 1420" stroke="#fff" stroke-width="1.5" fill="none"/><path d="M1989 1239 L1988 1273" stroke="#fff" stroke-width="1.5" fill="none"/><path d="M1990 1414 L1989 1441" stroke="#fff" stroke-width="2" fill="none"/><path d="M2100 1288 L2100 1298" stroke="#fff" stroke-width="2" fill="none"/><path d="M1977 1289 L1972 1313" stroke="#fff" stroke-width="1.5" fill="none"/><path d="M2136 1297 L2135 1312" stroke="#fff" stroke-width="2" fill="none"/><path d="M2161 1459 L2167 1491" stroke="#fff" stroke-width="2" fill="none"/><path d="M2034 1470 L2034 1491" stroke="#fff" stroke-width="1.5" fill="none"/><path d="M2054 1303 L2073 1310" stroke="#fff" stroke-width="2" fill="none"/><path d="M2073 1452 L2078 1472" stroke="#fff" stroke-width="2" fill="none"/><path d="M2089 1405 L2118 1395" stroke="#fff" stroke-width="1.5" fill="none"/><path d="M1880 1443 L1875 1468" stroke="#fff" stroke-width="2" fill="none"/><path d="M2134 1266 L2158 1270" stroke="#fff" stroke-width="2" fill="none"/><path d="M2045 1375 L2063 1378" stroke="#fff" stroke-width="1.5" fill="none"/><path d="M2170 1315 L2191 1307" stroke="#fff" stroke-width="2" fill="none"/><path d="M2154 1443 L2164 1451" stroke="#fff" stroke-width="1.5" fill="none"/><path d="M2027 1343 L2036 1372" stroke="#fff" stroke-width="2" fill="none"/><path d="M2130 1228 L2139 1242" stroke="#fff" stroke-width="2" fill="none"/><path d="M1901 1281 L1897 1295" stroke="#fff" stroke-width="2" fill="none"/><path d="M1847 1269 L1872 1267" stroke="#fff" stroke-width="1.5" fill="none"/><path d="M1920 1253 L1925 1270" stroke="#fff" stroke-width="2" fill="none"/><path d="M2186 1340 L2194 1363" stroke="#fff" stroke-width="2" fill="none"/><path d="M1951 1438 L1966 1438" stroke="#fff" stroke-width="2" fill="none"/><path d="M1907 1463 L1937 1474" stroke="#fff" stroke-width="2" fill="none"/><path d="M1985 1229 L2004 1223" stroke="#fff" stroke-width="2" fill="none"/><path d="M1942 1273 L1957 1267" stroke="#fff" stroke-width="1.5" fill="none"/><path d="M1873 1282 L1887 1285" stroke="#fff" stroke-width="2" fill="none"/><path d="M1918 1317 L1917 1339" stroke="#fff" stroke-width="1.5" fill="none"/><path d="M2149 1386 L2141 1410" stroke="#fff" stroke-width="2" fill="none"/><path d="M2032 1316 L2016 1332" stroke="#fff" stroke-width="2" fill="none"/><path d="M2105 1409 L2123 1402" stroke="#fff" stroke-width="1.5" fill="none"/><path d="M2090 1412 L2114 1407" stroke="#fff" stroke-width="2" fill="none"/><path d="M2130 1408 L2128 1421" stroke="#fff" stroke-width="2" fill="none"/><path d="M1942 1316 L1973 1327" stroke="#fff" stroke-width="1.5" fill="none"/><path d="M1851 1387 L1858 1414" stroke="#fff" stroke-width="2" fill="none"/><path d="M1929 1430 L1946 1428" stroke="#fff" stroke-width="1.5" fill="none"/><path d="M2097 1222 L2100 1236" stroke="#fff" stroke-width="1.5" fill="none"/><path d="M2039 1374 L2038 1402" stroke="#fff" stroke-width="2" fill="none"/><path d="M2173 1385 L2189 1391" stroke="#fff" stroke-width="1.5" fill="none"/><path d="M2155 1363 L2184 1368" stroke="#fff" stroke-width="1.5" fill="none"/><path d="M2120 1301 L2102 1319" stroke="#fff" stroke-width="1.5" fill="none"/><path d="M1941 1235 L1919 1240" stroke="#fff" stroke-width="2" fill="none"/><path d="M2023 1387 L2045 1381" stroke="#fff" stroke-width="1.5" fill="none"/><path d="M1856 1393 L1853 1409" stroke="#fff" stroke-width="2" fill="none"/><path d="M1930 1227 L1931 1241" stroke="#fff" stroke-width="2" fill="none"/><path d="M2081 1273 L2085 1292" stroke="#fff" stroke-width="2" fill="none"/><path d="M1888 1395 L1912 1396" stroke="#fff" stroke-width="1.5" fill="none"/><path d="M2084 1252 L2096 1257" stroke="#fff" stroke-width="2" fill="none"/><path d="M1752 1551 L1779 1555" stroke="#fff" stroke-width="1.5" fill="none"/><path d="M1790 1488 L1806 1513" stroke="#fff" stroke-width="1.5" fill="none"/><path d="M1771 1544 L1768 1560" stroke="#fff" stroke-width="1.5" fill="none"/><path d="M1822 1478 L1825 1507" stroke="#fff" stroke-width="1.5" fill="none"/><path d="M1813 1595 L1826 1616" stroke="#fff" stroke-width="1.5" fill="none"/><path d="M1784 1578 L1765 1580" stroke="#fff" stroke-width="1.5" fill="none"/><path d="M1852 1524 L1857 1534" stroke="#fff" stroke-width="1.5" fill="none"/><path d="M1787 1572 L1771 1590" stroke="#fff" stroke-width="1.5" fill="none"/><path d="M1835 1483 L1828 1491" stroke="#fff" stroke-width="1.5" fill="none"/><path d="M1801 1494 L1813 1521" stroke="#fff" stroke-width="1.5" fill="none"/><path d="M1818 1620 L1812 1630" stroke="#fff" stroke-width="1.5" fill="none"/><path d="M1843 1522 L1837 1538" stroke="#fff" stroke-width="1.5" fill="none"/><path d="M1834 1529 L1844 1538" stroke="#fff" stroke-width="1.5" fill="none"/><path d="M1870 1610 L1877 1618" stroke="#fff" stroke-width="1.5" fill="none"/><path d="M1764 1604 L1735 1611" stroke="#fff" stroke-width="1.5" fill="none"/><path d="M1802 1478 L1817 1490" stroke="#fff" stroke-width="1.5" fill="none"/><path d="M1845 1636 L1838 1658" stroke="#fff" stroke-width="1.5" fill="none"/><path d="M1768 1508 L1789 1518" stroke="#fff" stroke-width="1.5" fill="none"/><path d="M1802 1633 L1785 1642" stroke="#fff" stroke-width="1.5" fill="none"/><path d="M1778 1532 L1800 1534" stroke="#fff" stroke-width="1.5" fill="none"/><path d="M1858 1555 L1869 1560" stroke="#fff" stroke-width="1.5" fill="none"/><path d="M1757 1589 L1747 1593" stroke="#fff" stroke-width="1.5" fill="none"/><path d="M1751 1630 L1772 1643" stroke="#fff" stroke-width="1.5" fill="none"/><path d="M1799 1471 L1780 1484" stroke="#fff" stroke-width="1.5" fill="none"/><path d="M1824 1548 L1821 1568" stroke="#fff" stroke-width="1.5" fill="none"/><path d="M1806 1559 L1801 1571" stroke="#fff" stroke-width="1.5" fill="none"/><path d="M1802 1572 L1828 1578" stroke="#fff" stroke-width="1.5" fill="none"/><path d="M1844 1525 L1834 1544" stroke="#fff" stroke-width="1.5" fill="none"/><path d="M1805 1532 L1799 1543" stroke="#fff" stroke-width="1.5" fill="none"/><path d="M1862 1559 L1852 1583" stroke="#fff" stroke-width="1.5" fill="none"/><path d="M1779 1594 L1772 1604" stroke="#fff" stroke-width="1.5" fill="none"/><path d="M1825 1563 L1808 1566" stroke="#fff" stroke-width="1.5" fill="none"/><path d="M1781 1544 L1791 1554" stroke="#fff" stroke-width="1.5" fill="none"/><path d="M1876 1504 L1866 1514" stroke="#fff" stroke-width="1.5" fill="none"/><path d="M1859 1578 L1878 1591" stroke="#fff" stroke-width="1.5" fill="none"/><path d="M1842 1508 L1845 1529" stroke="#fff" stroke-width="1.5" fill="none"/><path d="M1841 1593 L1820 1599" stroke="#fff" stroke-width="1.5" fill="none"/><path d="M1861 1583 L1850 1591" stroke="#fff" stroke-width="1.5" fill="none"/><path d="M1815 1555 L1790 1569" stroke="#fff" stroke-width="1.5" fill="none"/><path d="M1831 1630 L1831 1650" stroke="#fff" stroke-width="1.5" fill="none"/><path d="M1839 1561 L1825 1562" stroke="#fff" stroke-width="1.5" fill="none"/><path d="M1812 1486 L1820 1506" stroke="#fff" stroke-width="1.5" fill="none"/><path d="M1803 1478 L1826 1481" stroke="#fff" stroke-width="1.5" fill="none"/><path d="M1874 1547 L1886 1551" stroke="#fff" stroke-width="1.5" fill="none"/><path d="M1868 1485 L1854 1485" stroke="#fff" stroke-width="1.5" fill="none"/><path d="M1765 1592 L1773 1607" stroke="#fff" stroke-width="1.5" fill="none"/><path d="M1859 1604 L1852 1612" stroke="#fff" stroke-width="1.5" fill="none"/><path d="M1783 1510 L1782 1530" stroke="#fff" stroke-width="1.5" fill="none"/><path d="M1796 1552 L1782 1561" stroke="#fff" stroke-width="1.5" fill="none"/><path d="M1796 1525 L1793 1535" stroke="#fff" stroke-width="1.5" fill="none"/><path d="M1868 1510 L1879 1532" stroke="#fff" stroke-width="1.5" fill="none"/><path d="M1753 1635 L1758 1660" stroke="#fff" stroke-width="1.5" fill="none"/><path d="M1813 1482 L1822 1492" stroke="#fff" stroke-width="1.5" fill="none"/><path d="M1871 1616 L1857 1639" stroke="#fff" stroke-width="1.5" fill="none"/><path d="M1826 1512 L1801 1512" stroke="#fff" stroke-width="1.5" fill="none"/><path d="M1785 1544 L1815 1546" stroke="#fff" stroke-width="1.5" fill="none"/><path d="M1813 1551 L1840 1553" stroke="#fff" stroke-width="1.5" fill="none"/><path d="M1760 1574 L1750 1593" stroke="#fff" stroke-width="1.5" fill="none"/><path d="M1860 1632 L1849 1647" stroke="#fff" stroke-width="1.5" fill="none"/><path d="M1780 1630 L1779 1647" stroke="#fff" stroke-width="1.5" fill="none"/><polygon points="1483.5,1213.2 1516.1,1213.2 1516.1,1236.2 1525.0,1240.7 1536.9,1227.3 1563.6,1215.4 1581.4,1213.2 1646.6,1213.2 1646.6,1219.9 1643.6,1230.3 1628.8,1240.7 1627.3,1262.9 1640.7,1262.9 1634.7,1277.7 1622.9,1292.6 1606.6,1294.1 1608.1,1300.0 1618.4,1303.0 1615.5,1316.3 1596.2,1311.9 1590.3,1329.7 1602.1,1344.5 1612.5,1347.5 1608.1,1386.0 1599.2,1389.0 1575.4,1374.2 1578.4,1351.9 1560.6,1340.0 1551.7,1350.4 1535.4,1347.5 1525.0,1344.5 1519.1,1350.4 1519.1,1334.1 1510.2,1323.7 1501.3,1328.2 1486.4,1332.6 1450.8,1335.6 1447.9,1356.4 1433.0,1366.7 1427.1,1392.0 1421.2,1383.1 1430.1,1351.9 1439.0,1329.7 1459.7,1295.5 1471.6,1270.3 1476.0,1252.5 1483.5,1240.7" fill="#abd3fb"/><polygon points="1496.8,1273.3 1514.6,1273.3 1504.2,1295.5 1501.3,1305.9 1513.1,1314.8 1519.1,1334.1 1510.2,1323.7 1501.3,1328.2 1496.8,1314.8 1495.3,1300.0 1484.9,1300.0 1492.4,1291.1" fill="#eceee9"/><polygon points="1516.1,1295.5 1542.8,1295.5 1557.6,1304.4 1553.2,1314.8 1568.0,1323.7 1565.0,1328.2 1551.7,1326.7 1539.8,1323.7 1516.1,1307.4" fill="#d5e8cf"/><polygon points="1484.9,1294.1 1504.2,1282.2 1501.3,1300.0 1489.4,1301.5" fill="#d5e8cf"/><polygon points="1517.6,1356.4 1526.5,1359.3 1528.0,1374.2 1532.4,1378.6 1525.0,1383.1 1517.6,1366.7" fill="#abd3fb"/><polygon points="1525.0,1344.5 1535.4,1347.5 1544.3,1344.5 1557.6,1353.4 1560.6,1374.2 1545.8,1377.1 1535.4,1359.3" fill="#d5e8cf"/><polygon points="1783.0,1637.0 1800.0,1610.0 1830.0,1575.0 1870.0,1545.0 1910.0,1522.0 1960.0,1486.0 2033.0,1470.0 2106.0,1466.0 2136.0,1452.0 2166.0,1420.0 2195.0,1382.0 2210.0,1338.0 2201.0,1280.0 2195.0,1236.0 2220.0,1212.0 2503.0,1212.0 2503.0,1637.0" fill="#abd3fb"/><polygon points="2106.0,1458.0 2140.0,1470.0 2150.0,1520.0 2166.0,1559.0 2210.0,1585.0 2254.0,1544.0 2307.0,1486.0 2307.0,1441.0 2254.0,1397.0 2210.0,1382.0 2190.0,1395.0 2160.0,1430.0" fill="#eceee9"/><ellipse cx="2418" cy="1420" rx="28" ry="62" fill="#eceee9"/><ellipse cx="2020" cy="1485" rx="45" ry="12" fill="#eceee9"/><path d="M1700 1215 L1760 1260 L1780 1300 L1730 1320 L1700 1340 L1690 1370 L1700 1420 L1690 1460 L1720 1480 L1760 1470 L1790 1460 L1830 1450 L1860 1470 L1900 1490" stroke="#9aa0a6" stroke-width="1.5" stroke-dasharray="3 3" fill="none"/><path d="M2280 1212 L2270 1240 L2250 1290" stroke="#8ab4f8" stroke-width="1.5" stroke-dasharray="5 4" fill="none"/><path d="M2503 1520 L2450 1560 L2380 1590 L2330 1610 L2320 1637" stroke="#8ab4f8" stroke-width="1.5" stroke-dasharray="5 4" fill="none"/><polyline points="1657.3,1213.6 1641.1,1263.8 1620.4,1322.8 1623.4,1355.3 1644.0,1367.1 1648.4,1396.6 1635.2,1426.1 1614.5,1440.9" stroke="#e9c35a" stroke-width="5.5" fill="none" stroke-linejoin="round" stroke-linecap="round"/><polyline points="1657.3,1213.6 1641.1,1263.8 1620.4,1322.8 1623.4,1355.3 1644.0,1367.1 1648.4,1396.6 1635.2,1426.1 1614.5,1440.9" stroke="#f7d87c" stroke-width="3.5" fill="none" stroke-linejoin="round" stroke-linecap="round"/><polyline points="1348.9,1386.3 1413.8,1390.7 1458.1,1414.3 1481.7,1443.8 1517.1,1443.8 1576.1,1437.9 1620.4,1437.9 1649.9,1414.3 1694.2,1384.8 1738.5,1373.0 1782.7,1364.1 1827.0,1358.2 1871.3,1358.2 1900.8,1337.6 1940.1,1287.4" stroke="#e9c35a" stroke-width="5.5" fill="none" stroke-linejoin="round" stroke-linecap="round"/><polyline points="1348.9,1386.3 1413.8,1390.7 1458.1,1414.3 1481.7,1443.8 1517.1,1443.8 1576.1,1437.9 1620.4,1437.9 1649.9,1414.3 1694.2,1384.8 1738.5,1373.0 1782.7,1364.1 1827.0,1358.2 1871.3,1358.2 1900.8,1337.6 1940.1,1287.4" stroke="#f7d87c" stroke-width="3.5" fill="none" stroke-linejoin="round" stroke-linecap="round"/><polyline points="1407.9,1635.7 1487.6,1544.2 1596.8,1420.2 1611.5,1396.6" stroke="#e9c35a" stroke-width="5.5" fill="none" stroke-linejoin="round" stroke-linecap="round"/><polyline points="1407.9,1635.7 1487.6,1544.2 1596.8,1420.2 1611.5,1396.6" stroke="#f7d87c" stroke-width="3.5" fill="none" stroke-linejoin="round" stroke-linecap="round"/><polyline points="1614.5,1440.9 1626.3,1485.2 1641.1,1558.9 1694.2,1597.3 1717.8,1635.7" stroke="#e9c35a" stroke-width="5.5" fill="none" stroke-linejoin="round" stroke-linecap="round"/><polyline points="1614.5,1440.9 1626.3,1485.2 1641.1,1558.9 1694.2,1597.3 1717.8,1635.7" stroke="#f7d87c" stroke-width="3.5" fill="none" stroke-linejoin="round" stroke-linecap="round"/><polyline points="1856.5,1246.1 1915.6,1263.8 1940.1,1275.6" stroke="#e9c35a" stroke-width="5.5" fill="none" stroke-linejoin="round" stroke-linecap="round"/><polyline points="1856.5,1246.1 1915.6,1263.8 1940.1,1275.6" stroke="#f7d87c" stroke-width="3.5" fill="none" stroke-linejoin="round" stroke-linecap="round"/><polyline points="1871.3,1358.2 1900.8,1390.7 1906.7,1414.3 1894.9,1452.7" stroke="#e9c35a" stroke-width="5.5" fill="none" stroke-linejoin="round" stroke-linecap="round"/><polyline points="1871.3,1358.2 1900.8,1390.7 1906.7,1414.3 1894.9,1452.7" stroke="#f7d87c" stroke-width="3.5" fill="none" stroke-linejoin="round" stroke-linecap="round"/><polyline points="1747.3,1632.7 1782.7,1573.7 1841.8,1499.9 1900.8,1455.6 1940.1,1437.9" stroke="#e9c35a" stroke-width="5.5" fill="none" stroke-linejoin="round" stroke-linecap="round"/><polyline points="1747.3,1632.7 1782.7,1573.7 1841.8,1499.9 1900.8,1455.6 1940.1,1437.9" stroke="#f7d87c" stroke-width="3.5" fill="none" stroke-linejoin="round" stroke-linecap="round"/><polyline points="1782.7,1367.1 1788.6,1396.6 1785.7,1420.2 1797.5,1423.2" stroke="#e9c35a" stroke-width="5.5" fill="none" stroke-linejoin="round" stroke-linecap="round"/><polyline points="1782.7,1367.1 1788.6,1396.6 1785.7,1420.2 1797.5,1423.2" stroke="#f7d87c" stroke-width="3.5" fill="none" stroke-linejoin="round" stroke-linecap="round"/><polyline points="1348.9,1299.2 1399.0,1257.9 1440.4,1213.6" stroke="#e9c35a" stroke-width="5.5" fill="none" stroke-linejoin="round" stroke-linecap="round"/><polyline points="1348.9,1299.2 1399.0,1257.9 1440.4,1213.6" stroke="#f7d87c" stroke-width="3.5" fill="none" stroke-linejoin="round" stroke-linecap="round"/><polyline points="1950.2,1213.6 1941.3,1263.8 1967.9,1322.8 1976.7,1396.6 1959.0,1455.6 1947.2,1485.1" stroke="#e9c35a" stroke-width="5.5" fill="none" stroke-linejoin="round" stroke-linecap="round"/><polyline points="1950.2,1213.6 1941.3,1263.8 1967.9,1322.8 1976.7,1396.6 1959.0,1455.6 1947.2,1485.1" stroke="#f7d87c" stroke-width="3.5" fill="none" stroke-linejoin="round" stroke-linecap="round"/><polyline points="1900.0,1405.4 1988.5,1405.4 2077.0,1384.7 2136.1,1378.8 2180.3,1355.2 2195.1,1337.5" stroke="#e9c35a" stroke-width="5.5" fill="none" stroke-linejoin="round" stroke-linecap="round"/><polyline points="1900.0,1405.4 1988.5,1405.4 2077.0,1384.7 2136.1,1378.8 2180.3,1355.2 2195.1,1337.5" stroke="#f7d87c" stroke-width="3.5" fill="none" stroke-linejoin="round" stroke-linecap="round"/><polyline points="1900.0,1455.6 1959.0,1440.8 2018.0,1434.9 2041.6,1458.5 2106.6,1464.4 2142.0,1446.7 2165.6,1432.0 2195.1,1432.0 2283.6,1426.1 2327.9,1437.9 2372.1,1470.3 2431.1,1514.6 2475.4,1541.1 2501.9,1552.9" stroke="#e9c35a" stroke-width="5.5" fill="none" stroke-linejoin="round" stroke-linecap="round"/><polyline points="1900.0,1455.6 1959.0,1440.8 2018.0,1434.9 2041.6,1458.5 2106.6,1464.4 2142.0,1446.7 2165.6,1432.0 2195.1,1432.0 2283.6,1426.1 2327.9,1437.9 2372.1,1470.3 2431.1,1514.6 2475.4,1541.1 2501.9,1552.9" stroke="#f7d87c" stroke-width="3.5" fill="none" stroke-linejoin="round" stroke-linecap="round"/><polyline points="1997.4,1302.1 2026.9,1249.0 2041.6,1213.6" stroke="#e9c35a" stroke-width="5.5" fill="none" stroke-linejoin="round" stroke-linecap="round"/><polyline points="1997.4,1302.1 2026.9,1249.0 2041.6,1213.6" stroke="#f7d87c" stroke-width="3.5" fill="none" stroke-linejoin="round" stroke-linecap="round"/><polyline points="2012.1,1337.5 2032.8,1278.5 2053.4,1213.6" stroke="#e9c35a" stroke-width="5.5" fill="none" stroke-linejoin="round" stroke-linecap="round"/><polyline points="2012.1,1337.5 2032.8,1278.5 2053.4,1213.6" stroke="#f7d87c" stroke-width="3.5" fill="none" stroke-linejoin="round" stroke-linecap="round"/><polyline points="2077.0,1367.0 2091.8,1316.9 2130.2,1263.8 2156.7,1225.4 2180.3,1225.4 2195.1,1249.0" stroke="#e9c35a" stroke-width="5.5" fill="none" stroke-linejoin="round" stroke-linecap="round"/><polyline points="2077.0,1367.0 2091.8,1316.9 2130.2,1263.8 2156.7,1225.4 2180.3,1225.4 2195.1,1249.0" stroke="#f7d87c" stroke-width="3.5" fill="none" stroke-linejoin="round" stroke-linecap="round"/><polyline points="1900.0,1308.0 1929.5,1287.4 1988.5,1302.1 2023.9,1322.8" stroke="#e9c35a" stroke-width="5.5" fill="none" stroke-linejoin="round" stroke-linecap="round"/><polyline points="1900.0,1308.0 1929.5,1287.4 1988.5,1302.1 2023.9,1322.8" stroke="#f7d87c" stroke-width="3.5" fill="none" stroke-linejoin="round" stroke-linecap="round"/><polyline points="2065.2,1213.6 2106.6,1263.8 2144.9,1302.1" stroke="#e9c35a" stroke-width="5.5" fill="none" stroke-linejoin="round" stroke-linecap="round"/><polyline points="2065.2,1213.6 2106.6,1263.8 2144.9,1302.1" stroke="#f7d87c" stroke-width="3.5" fill="none" stroke-linejoin="round" stroke-linecap="round"/><polyline points="2156.7,1225.4 2168.5,1257.9" stroke="#e9c35a" stroke-width="5.5" fill="none" stroke-linejoin="round" stroke-linecap="round"/><polyline points="2156.7,1225.4 2168.5,1257.9" stroke="#f7d87c" stroke-width="3.5" fill="none" stroke-linejoin="round" stroke-linecap="round"/><circle cx="2002" cy="1305" r="50" fill="#e57373" fill-opacity="0.25"/><circle cx="2002" cy="1305" r="11" fill="#e64b44" stroke="#fff" stroke-width="2.5"/><circle cx="1842" cy="1476" r="10" fill="#4285f4"/><rect x="1632" y="1234" width="18" height="19" rx="1.5" fill="#f5d246" stroke="#d8b430" stroke-width="1"/><text x="1641.0" y="1249" font-size="14" font-weight="bold" text-anchor="middle" fill="#333" font-family="Liberation Sans">6</text><rect x="1909" y="1258" width="28" height="19" rx="1.5" fill="#f5d246" stroke="#d8b430" stroke-width="1"/><text x="1923.0" y="1273" font-size="14" font-weight="bold" text-anchor="middle" fill="#333" font-family="Liberation Sans">17</text><rect x="1892" y="1307" width="29" height="18" rx="1.5" fill="#f5d246" stroke="#d8b430" stroke-width="1"/><text x="1906.5" y="1321" font-size="14" font-weight="bold" text-anchor="middle" fill="#333" font-family="Liberation Sans">04</text><rect x="1350" y="1380" width="27" height="20" rx="1.5" fill="#f5d246" stroke="#d8b430" stroke-width="1"/><text x="1363.5" y="1396" font-size="14" font-weight="bold" text-anchor="middle" fill="#333" font-family="Liberation Sans">21</text><rect x="1548" y="1429" width="27" height="18" rx="1.5" fill="#f5d246" stroke="#d8b430" stroke-width="1"/><text x="1561.5" y="1443" font-size="14" font-weight="bold" text-anchor="middle" fill="#333" font-family="Liberation Sans">21</text><rect x="1620" y="1497" width="18" height="19" rx="1.5" fill="#f5d246" stroke="#d8b430" stroke-width="1"/><text x="1629.0" y="1512" font-size="14" font-weight="bold" text-anchor="middle" fill="#333" font-family="Liberation Sans">6</text><rect x="1470" y="1543" width="27" height="19" rx="1.5" fill="#f5d246" stroke="#d8b430" stroke-width="1"/><text x="1483.5" y="1558" font-size="14" font-weight="bold" text-anchor="middle" fill="#333" font-family="Liberation Sans">14</text><rect x="1696" y="1594" width="18" height="18" rx="1.5" fill="#f5d246" stroke="#d8b430" stroke-width="1"/><text x="1705.0" y="1608" font-size="14" font-weight="bold" text-anchor="middle" fill="#333" font-family="Liberation Sans">6</text><rect x="1793" y="1527" width="34" height="17" rx="1.5" fill="#6f9a4f" stroke="#5e8a40" stroke-width="1"/><text x="1810.0" y="1540" font-size="14" font-weight="bold" text-anchor="middle" fill="#fff" font-family="Liberation Sans">E20</text><rect x="2024" y="1253" width="34" height="18" rx="1.5" fill="#6f9a4f" stroke="#5e8a40" stroke-width="1"/><text x="2041.0" y="1267" font-size="14" font-weight="bold" text-anchor="middle" fill="#fff" font-family="Liberation Sans">E47</text><rect x="1964" y="1308" width="29" height="18" rx="1.5" fill="#f5d246" stroke="#d8b430" stroke-width="1"/><text x="1978.5" y="1322" font-size="14" font-weight="bold" text-anchor="middle" fill="#333" font-family="Liberation Sans">03</text><rect x="1957" y="1397" width="28" height="19" rx="1.5" fill="#f5d246" stroke="#d8b430" stroke-width="1"/><text x="1971.0" y="1412" font-size="14" font-weight="bold" text-anchor="middle" fill="#333" font-family="Liberation Sans">21</text><rect x="2157" y="1425" width="34" height="18" rx="1.5" fill="#6f9a4f" stroke="#5e8a40" stroke-width="1"/><text x="2174.0" y="1439" font-size="14" font-weight="bold" text-anchor="middle" fill="#fff" font-family="Liberation Sans">E20</text><rect x="2475" y="1540" width="34" height="18" rx="1.5" fill="#6f9a4f" stroke="#5e8a40" stroke-width="1"/><text x="2492.0" y="1554" font-size="14" font-weight="bold" text-anchor="middle" fill="#fff" font-family="Liberation Sans">E20</text><text x="1349" y="1280" font-size="20" fill="#5f6368" font-family="Liberation Sans"  stroke="#fff" stroke-width="3" paint-order="stroke" letter-spacing="-0.3">ke Hyllinge</text><text x="1567" y="1416" font-size="25" fill="#3c4043" font-family="Liberation Sans"  stroke="#fff" stroke-width="3" paint-order="stroke" letter-spacing="-0.3">Roskilde</text><text x="1684" y="1395" font-size="20" fill="#5f6368" font-family="Liberation Sans"  stroke="#fff" stroke-width="3" paint-order="stroke" letter-spacing="-0.3">Hedehusene</text><text x="1821" y="1405" font-size="20" fill="#5f6368" font-family="Liberation Sans"  stroke="#fff" stroke-width="3" paint-order="stroke" letter-spacing="-0.3">Taastrup</text><text x="1349" y="1427" font-size="20" fill="#5f6368" font-family="Liberation Sans"  stroke="#fff" stroke-width="3" paint-order="stroke" letter-spacing="-0.3">e Såby</text><text x="1445" y="1498" font-size="20" fill="#5f6368" font-family="Liberation Sans"  stroke="#fff" stroke-width="3" paint-order="stroke" letter-spacing="-0.3">Lejre</text><text x="1349" y="1513" font-size="20" fill="#5f6368" font-family="Liberation Sans"  stroke="#fff" stroke-width="3" paint-order="stroke" letter-spacing="-0.3">lsø</text><text x="1704" y="1509" font-size="20" fill="#5f6368" font-family="Liberation Sans"  stroke="#fff" stroke-width="3" paint-order="stroke" letter-spacing="-0.3">Tune</text><text x="1769" y="1504" font-size="20" fill="#5f6368" font-family="Liberation Sans"  stroke="#fff" stroke-width="3" paint-order="stroke" letter-spacing="-0.3">Greve</text><text x="1756" y="1571" font-size="20" fill="#5f6368" font-family="Liberation Sans"  stroke="#fff" stroke-width="3" paint-order="stroke" letter-spacing="-0.3">Karlslunde</text><text x="1477" y="1609" font-size="20" fill="#5f6368" font-family="Liberation Sans"  stroke="#fff" stroke-width="3" paint-order="stroke" letter-spacing="-0.3">Viby Sjælland</text><text x="1614" y="1613" font-size="20" fill="#5f6368" font-family="Liberation Sans"  stroke="#fff" stroke-width="3" paint-order="stroke" letter-spacing="-0.3">Havdrup</text><text x="1678" y="1641" font-size="20" fill="#5f6368" font-family="Liberation Sans"  stroke="#fff" stroke-width="3" paint-order="stroke" letter-spacing="-0.3">Solrød Strand</text><text x="1892" y="1240" font-size="19" fill="#5f6368" font-family="Liberation Sans"  stroke="#fff" stroke-width="3" paint-order="stroke" letter-spacing="-0.3">Ballerup</text><text x="1978" y="1228" font-size="22" fill="#3c4043" font-family="Liberation Sans"  stroke="#fff" stroke-width="3" paint-order="stroke" letter-spacing="-0.3">Herlev</text><text x="1940" y="1357" font-size="24" fill="#3c4043" font-family="Liberation Sans"  stroke="#fff" stroke-width="3" paint-order="stroke" letter-spacing="-0.3">Glostrup</text><text x="2111" y="1343" font-size="28" fill="#3c4043" font-family="Liberation Sans" font-weight="bold" stroke="#fff" stroke-width="3" paint-order="stroke" letter-spacing="-0.3">København</text><text x="2031" y="1413" font-size="20" fill="#5f6368" font-family="Liberation Sans"  stroke="#fff" stroke-width="3" paint-order="stroke" letter-spacing="-0.3">Hvidovre</text><text x="2191" y="1479" font-size="20" fill="#5f6368" font-family="Liberation Sans"  stroke="#fff" stroke-width="3" paint-order="stroke" letter-spacing="-0.3">Kastrup</text><text x="2260" y="1513" font-size="20" fill="#5f6368" font-family="Liberation Sans"  stroke="#fff" stroke-width="3" paint-order="stroke" letter-spacing="-0.3">Dragør</text><text x="2139" y="1215" font-size="20" fill="#5f6368" font-family="Liberation Sans"  stroke="#fff" stroke-width="3" paint-order="stroke" letter-spacing="-0.3">Hellerup</text><rect x="2185" y="1253.5" width="276" height="211" rx="4" fill="#fff" fill-opacity="0.86" style="filter:drop-shadow(0 1px 2px rgba(0,0,0,.15))"/><text x="2364" y="1430" font-size="24" fill="#e8eaec" font-family="Liberation Sans">Saltholm</text><g transform="translate(2263,1349)"><path d="M0 6 Q0 1 5 1 L30 1 L0 45 Z" fill="#34a853"/><path d="M0 45 L30 1 L40 1 L40 20 L10 59 L5 59 Q0 59 0 54 Z" fill="#fbbc04"/><path d="M10 59 L30 33 L45 59 Z" fill="#4285f4"/><path d="M30 33 L40 20 L52 40 L52 54 Q52 59 47 59 L45 59 Z" fill="#fff"/><path d="M40 20 L52 20 L52 40 Z" fill="#c0c0c0"/><text x="6" y="22" font-size="17" font-weight="bold" fill="#fff" font-family="Liberation Sans">G</text><path d="M46 -8 C37 -8 32 -1 33 6 C34 14 43 22 46 32 C49 22 58 14 59 6 C60 -1 55 -8 46 -8 Z" fill="#db4437"/><circle cx="46" cy="4" r="4" fill="#8a1f17"/></g><text x="1353" y="1626" font-size="31" font-family="Liberation Sans" font-weight="bold" stroke="#fff" stroke-width="3" paint-order="stroke" letter-spacing="-1"><tspan fill="#4285f4">G</tspan><tspan fill="#ea4335">o</tspan><tspan fill="#fbbc05">o</tspan><tspan fill="#4285f4">g</tspan><tspan fill="#34a853">l</tspan><tspan fill="#ea4335">e</tspan></text><rect x="2295" y="1612" width="208" height="25" fill="#fff" fill-opacity="0.75"/><text x="2305" y="1630" font-size="15.5" fill="#333" font-family="Liberation Sans" letter-spacing="-0.2">Rapporter en fejl på kortet</text></g></svg>
<div class="t" style="left:2225.0px;top:1306.8px;font-size:21.5px;letter-spacing:0.23px;color:#141414;">14 min. to job</div>
<div class="a" style="left:2571px;top:88px;width:80.5px;height:80.5px;border-radius:50%;background:rgba(0,0,0,.58)"></div>
<svg style="left:2591px;top:108px" width="40" height="40"><path d="M4.5 5 L34.5 35 M34.5 5 L4.5 35" stroke="#fff" stroke-width="3.2" stroke-linecap="round"/></svg>
<div class="a" style="left:2546px;top:160px;width:97px;height:48px;border-radius:0 24px 24px 0;border:1.5px solid #45494b;border-left:none"></div>
<div class="t" style="left:2555.0px;top:175.7px;font-size:18.5px;letter-spacing:0.38px;color:#2c2f31;">Edit job</div>
<div class="a" style="left:2570px;top:194px;width:81px;height:81px;border-radius:50%;background:rgba(0,0,0,.1)"></div>
<svg style="left:2595px;top:213px" width="30" height="42"><path d="M23 5 L6 21 L23 37" fill="none" stroke="#8a8d8f" stroke-width="2.6"/></svg>
<div class="a" style="left:2570px;top:299px;width:81px;height:81px;border-radius:50%;background:#252829"></div>
<svg style="left:2597px;top:318px" width="30" height="42"><path d="M6.5 5.5 L23 21 L6.5 36.5" fill="none" stroke="#fff" stroke-width="3.2"/></svg>
<svg style="left:2605px;top:356px" width="22" height="22" viewBox="0 0 22 22"><circle cx="11" cy="11" r="6.5" fill="none" stroke="#3e4244" stroke-width="4"/><g stroke="#3e4244" stroke-width="3.5"><line x1="11" y1="1" x2="11" y2="21"/><line x1="1" y1="11" x2="21" y2="11"/><line x1="4" y1="4" x2="18" y2="18"/><line x1="18" y1="4" x2="4" y2="18"/></g><circle cx="11" cy="11" r="3" fill="#5a5e60"/></svg>
<div class="a" style="left:2353px;top:200.5px;width:245px;height:324.5px;background:#2f3234;border-radius:6px;box-shadow:0 2px 6px rgba(0,0,0,.25)"></div>
<svg style="left:2459px;top:187px" width="30" height="15"><path d="M1.5 14 L14.5 1 L27.5 14 Z" fill="#2f3234"/></svg>
<div class="a" style="left:2344px;top:394.3px;width:266px;height:79.7px;background:#56e70a;border-radius:7px;box-shadow:0 1px 2px rgba(0,0,0,.3)"></div>
<div class="a" style="left:2360px;top:410.5px;width:234px;height:47.5px;background:#434749"></div>
<div class="t" style="left:2418.6px;top:221.7px;font-size:22.0px;letter-spacing:-0.53px;color:#fff;">Task</div>
<div class="t" style="left:2417.6px;top:287.1px;font-size:22.0px;letter-spacing:0.47px;color:#fff;">Move</div>
<div class="t" style="left:2418.6px;top:351.7px;font-size:22.0px;letter-spacing:0.38px;color:#fff;">Automation</div>
<div class="t" style="left:2417.6px;top:416.4px;font-size:22.0px;letter-spacing:0.12px;color:#fff;">Export</div>
<div class="t" style="left:2417.6px;top:481.5px;font-size:22.0px;letter-spacing:0.56px;color:#fff;">Delete</div>
<svg style="left:2376px;top:223px" width="20" height="19" viewBox="0 0 20 19"><path d="M1.5 10 L6.5 16.5 L17.5 2" fill="none" stroke="#9a9d9f" stroke-width="3"/></svg>
<svg style="left:2375px;top:288px" width="21" height="18" viewBox="0 0 21 18"><path d="M1.5 16.5 C3 10 7 6.5 13 6.5 L13 1.5 L20 8 L13 14.5 L13 10 C8 10 4.5 12 1.5 16.5 Z" fill="#9a9d9f"/></svg>
<svg style="left:2374px;top:352px" width="22" height="22" viewBox="0 0 22 22"><path d="M3.5 9.5 A8 8 0 0 1 17.5 5.5" fill="none" stroke="#9a9d9f" stroke-width="3.2"/><path d="M13.5 6.5 L20 7.5 L19.5 1 Z" fill="#9a9d9f"/><path d="M18.5 12.5 A8 8 0 0 1 4.5 16.5" fill="none" stroke="#9a9d9f" stroke-width="3.2"/><path d="M8.5 15.5 L2 14.5 L2.5 21 Z" fill="#9a9d9f"/></svg>
<svg style="left:2375px;top:417px" width="22" height="20" viewBox="0 0 22 20"><path d="M9 4.5 H3 A1.8 1.8 0 0 0 1.2 6.3 V17 A1.8 1.8 0 0 0 3 18.8 H15 A1.8 1.8 0 0 0 16.8 17 V12" fill="none" stroke="#9a9d9f" stroke-width="2.6"/><path d="M6 13 C7 8 10.5 6.5 14 6.5 V3 L20 8 L14 13 V9.8 C11 9.8 8.5 10.5 6 13 Z" fill="#9a9d9f"/></svg>
<svg style="left:2376px;top:481px" width="19" height="21" viewBox="0 0 19 21"><path d="M1.5 5 H17.5 L16 18.5 A2 2 0 0 1 14 20.5 H5 A2 2 0 0 1 3 18.5 Z" fill="#9a9d9f"/><path d="M3.5 4.5 C4 1.5 7 0.5 9.5 0.5 C12 0.5 15 1.5 15.5 4.5 Z" fill="#9a9d9f"/><path d="M7 3.5 Q9.5 1.5 12 3.5" stroke="#2f3234" stroke-width="1.2" fill="none"/></svg>
<div class="a" style="left:56px;top:1782px;width:186px;height:30px;background:#fbfbfb;border:1px solid #d7d9da;border-left:none;border-bottom:none;border-radius:0 6px 0 0"></div>
<div class="t" style="left:65.8px;top:1787.7px;font-size:19.5px;letter-spacing:0.71px;color:#4a4d50;">javascript:void(0);</div>

</body></html>
